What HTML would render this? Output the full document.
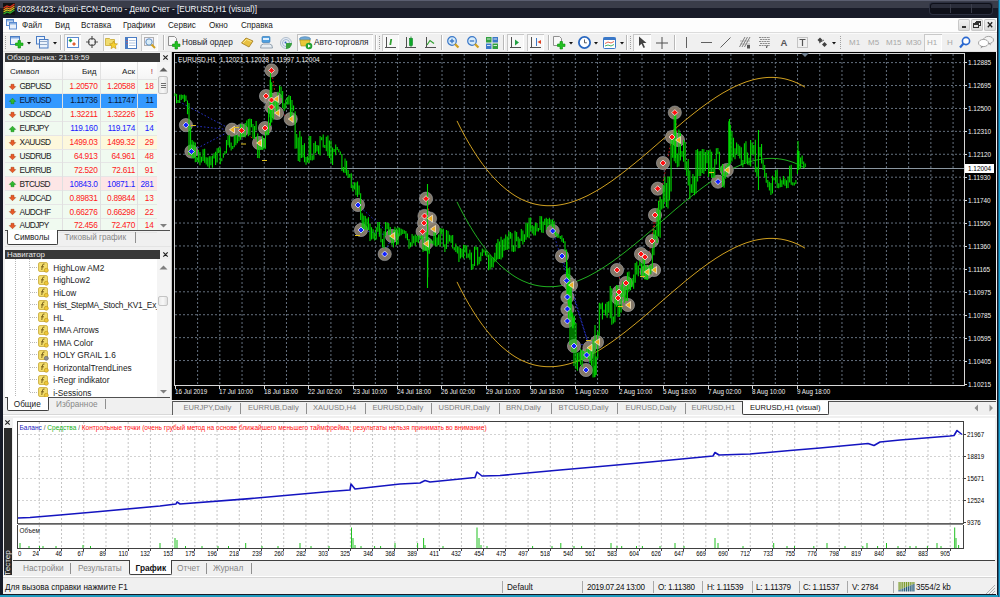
<!DOCTYPE html><html><head><meta charset="utf-8"><style>
html,body{margin:0;padding:0;width:1000px;height:597px;overflow:hidden;background:#f0f0f0;}
body{position:relative;font-family:"Liberation Sans", sans-serif;}
.t{position:absolute;white-space:nowrap;line-height:1;}
.r{text-align:right;}
svg{position:absolute;overflow:visible;}
</style></head><body>
<div style="position:absolute;left:0px;top:0px;width:1000px;height:597px;background:#161a27"></div>
<div style="position:absolute;left:0px;top:0px;width:1000px;height:1px;background:#5a5e70"></div>
<div style="position:absolute;left:0px;top:1px;width:1000px;height:7px;background:#3a3d4a"></div>
<div style="position:absolute;left:0px;top:8px;width:1000px;height:10px;background:#181b28"></div>
<div style="position:absolute;left:3px;top:18px;width:994px;height:577px;background:#f0f0f0"></div>
<div style="position:absolute;left:0px;top:595px;width:1000px;height:2px;background:#1f9cc0"></div>
<svg style="left:3px;top:3px" width="12" height="12" viewBox="0 0 12 12">
<rect x="0" y="0" width="12" height="12" fill="#111"/>
<path d="M0.5 5 L4 3 L7 4 L11.5 1" stroke="#e0301e" stroke-width="1.2" fill="none"/>
<path d="M0.5 7 L4 5 L7 6 L11.5 3" stroke="#f08a1e" stroke-width="1.2" fill="none"/>
<path d="M0.5 9 L4 7 L7 8 L11.5 5" stroke="#c8c820" stroke-width="1.2" fill="none"/>
<path d="M0.5 11 L4 9 L7 10 L11.5 7" stroke="#30b030" stroke-width="1.2" fill="none"/>
</svg>
<div class="t" style="left:17px;top:5.5px;font-size:8.15px;color:#f4f6fa;">60284423: Alpari-ECN-Demo - Демо Счет - [EURUSD,H1 (visual)]</div>
<div style="position:absolute;left:930px;top:3px;width:62px;height:11px;background:#0e1019;border-radius:3px;box-shadow:0 0 0 1px #2c3040;"></div>
<div style="position:absolute;left:931px;top:4px;width:60px;height:4px;background:#2a2d3a;border-radius:2px 2px 0 0"></div>
<div style="position:absolute;left:950px;top:4px;width:1px;height:9px;background:#3a3d4a"></div>
<div style="position:absolute;left:971px;top:4px;width:1px;height:9px;background:#3a3d4a"></div>
<div style="position:absolute;left:3px;top:18px;width:994px;height:14px;background:#fdfdfd"></div>
<div style="position:absolute;left:3px;top:32px;width:994px;height:1px;background:#dcdcdc"></div>
<svg style="left:6px;top:19px" width="11" height="11" viewBox="0 0 11 11">
<rect x="0.5" y="0.5" width="7" height="6" fill="#e8f0fa" stroke="#5a8ad0"/>
<rect x="3.5" y="3.5" width="7" height="6.5" fill="#e8f0fa" stroke="#5a8ad0"/>
<rect x="1" y="1" width="6" height="1.5" fill="#8ab0e0"/>
<rect x="4" y="4" width="6" height="1.5" fill="#8ab0e0"/>
</svg>
<div class="t" style="left:22px;top:21.8px;font-size:8.15px;color:#1a1a1a;">Файл</div>
<div class="t" style="left:55px;top:21.8px;font-size:8.15px;color:#1a1a1a;">Вид</div>
<div class="t" style="left:81px;top:21.8px;font-size:8.15px;color:#1a1a1a;">Вставка</div>
<div class="t" style="left:123px;top:21.8px;font-size:8.15px;color:#1a1a1a;">Графики</div>
<div class="t" style="left:168px;top:21.8px;font-size:8.15px;color:#1a1a1a;">Сервис</div>
<div class="t" style="left:209px;top:21.8px;font-size:8.15px;color:#1a1a1a;">Окно</div>
<div class="t" style="left:241px;top:21.8px;font-size:8.15px;color:#1a1a1a;">Справка</div>
<div style="position:absolute;left:958px;top:19px;width:12px;height:12px;background:linear-gradient(#f4f4f4,#d8d8d8);border-radius:2px;box-shadow:inset 0 0 0 1px #c8c8c8"></div>
<div style="position:absolute;left:971px;top:19px;width:12px;height:12px;background:linear-gradient(#f4f4f4,#d8d8d8);border-radius:2px;box-shadow:inset 0 0 0 1px #c8c8c8"></div>
<div style="position:absolute;left:984px;top:19px;width:12px;height:12px;background:linear-gradient(#f4f4f4,#d8d8d8);border-radius:2px;box-shadow:inset 0 0 0 1px #c8c8c8"></div>
<svg style="left:958px;top:19px" width="40" height="12" viewBox="0 0 40 12" shape-rendering="crispEdges">
<rect x="4" y="7" width="4" height="2" fill="#333"/>
<path d="M17.5 2.5 h5 v4 h-1.5 M17.5 2.5 v1.5" stroke="#333" stroke-width="1" fill="none"/>
<rect x="17.5" y="2.5" width="5" height="1.2" fill="#333"/>
<rect x="15.5" y="4.5" width="5" height="4" fill="none" stroke="#333" stroke-width="1"/>
<rect x="15.5" y="4.5" width="5" height="1.2" fill="#333"/>
</svg>
<svg style="left:958px;top:19px" width="40" height="12" viewBox="0 0 40 12">
<path d="M29.8 3.3 L34.2 8.2 M34.2 3.3 L29.8 8.2" stroke="#222" stroke-width="1.3"/>
</svg>
<div style="position:absolute;left:3px;top:33px;width:994px;height:19px;background:#f0f0f0"></div>
<div style="position:absolute;left:3px;top:33px;width:994px;height:1px;background:#fafafa"></div>
<div style="position:absolute;left:3px;top:51px;width:994px;height:1px;background:#e0e0e0"></div>
<div style="position:absolute;left:5px;top:36px;width:1px;height:1px;background:#a0a0a0"></div>
<div style="position:absolute;left:5px;top:38px;width:1px;height:1px;background:#a0a0a0"></div>
<div style="position:absolute;left:5px;top:40px;width:1px;height:1px;background:#a0a0a0"></div>
<div style="position:absolute;left:5px;top:42px;width:1px;height:1px;background:#a0a0a0"></div>
<div style="position:absolute;left:5px;top:44px;width:1px;height:1px;background:#a0a0a0"></div>
<div style="position:absolute;left:5px;top:46px;width:1px;height:1px;background:#a0a0a0"></div>
<div style="position:absolute;left:5px;top:48px;width:1px;height:1px;background:#a0a0a0"></div>
<svg style="left:10px;top:36px" width="14" height="13" viewBox="0 0 14 13">
<rect x="0.5" y="0.5" width="9" height="8" fill="#eaf2fc" stroke="#4a7cc4"/>
<rect x="1" y="1" width="8" height="1.5" fill="#80a8e0"/>
<path d="M8 4.5 h2.5 v2.5 h2.5 v2.5 h-2.5 v2.5 h-2.5 v-2.5 h-2.5 v-2.5 h2.5 z" fill="#22c022" stroke="#0a900a" stroke-width="0.6"/>
</svg>
<svg style="left:26.5px;top:41.5px" width="4" height="3"><path d="M0 0 H4 L2 2.5 Z" fill="#111"/></svg>
<svg style="left:36px;top:36px" width="13" height="13" viewBox="0 0 13 13">
<rect x="0.5" y="0.5" width="8" height="7.5" fill="#eaf2fc" stroke="#4a7cc4"/>
<rect x="3.5" y="3.5" width="8.5" height="8.5" fill="#eaf2fc" stroke="#4a7cc4"/>
<rect x="4" y="5" width="7" height="1" fill="#90a8c8"/><rect x="4" y="8" width="7" height="1" fill="#90a8c8"/>
</svg>
<svg style="left:52.5px;top:41.5px" width="4" height="3"><path d="M0 0 H4 L2 2.5 Z" fill="#111"/></svg>
<div style="position:absolute;left:60px;top:35px;width:1px;height:15px;background:#b8b8b8"></div>
<div style="position:absolute;left:61px;top:35px;width:1px;height:15px;background:#fff"></div>
<div style="position:absolute;left:64px;top:34px;width:17px;height:17px;background:#f8f8f8;box-shadow:inset 1px 1px 0 #c8c8c8, inset -1px -1px 0 #fff"></div>
<svg style="left:67px;top:37px" width="12" height="11" viewBox="0 0 12 11">
<rect x="0.5" y="0.5" width="11" height="10" fill="#fff" stroke="#5a8ad0"/>
<path d="M3.5 1.5 l2 2 -2 2 -2 -2z" fill="#20a040"/><path d="M7 5 l2 2 -2 2 -2 -2z" fill="#e06030"/>
</svg>
<svg style="left:86px;top:36px" width="12" height="12" viewBox="0 0 12 12">
<circle cx="6" cy="6" r="3.5" fill="none" stroke="#555" stroke-width="1.2"/>
<path d="M6 0 V4 M6 8 V12 M0 6 H4 M8 6 H12" stroke="#555" stroke-width="1.2"/>
</svg>
<div style="position:absolute;left:103px;top:34px;width:17px;height:17px;background:#f8f8f8;box-shadow:inset 1px 1px 0 #c8c8c8, inset -1px -1px 0 #fff"></div>
<svg style="left:105px;top:36px" width="13" height="13" viewBox="0 0 13 13">
<path d="M0.5 2.5 h4 l1 1 h4 v6 h-9z" fill="#f0dc70" stroke="#c8a830" stroke-width="0.8"/>
<path d="M8.5 5 l1.2 2.6 2.8 0.3 -2.1 1.9 0.6 2.8 -2.5 -1.4 -2.5 1.4 0.6 -2.8 -2.1 -1.9 2.8 -0.3z" fill="#f5d030" stroke="#c09010" stroke-width="0.6"/>
</svg>
<svg style="left:125px;top:37px" width="12" height="12" viewBox="0 0 12 12">
<rect x="0.5" y="0.5" width="11" height="11" fill="#fff" stroke="#4a7cc4"/>
<rect x="1" y="1" width="2" height="10" fill="#4a7cc4"/>
<path d="M4 3.5 H10.5 M4 6 H10.5 M4 8.5 H10.5" stroke="#a0b8d8" stroke-width="0.8"/>
<rect x="1.5" y="3" width="1" height="1" fill="#e04040"/><rect x="1.5" y="6" width="1" height="1" fill="#e04040"/>
</svg>
<div style="position:absolute;left:141px;top:34px;width:17px;height:17px;background:#f8f8f8;box-shadow:inset 1px 1px 0 #c8c8c8, inset -1px -1px 0 #fff"></div>
<svg style="left:144px;top:37px" width="12" height="12" viewBox="0 0 12 12">
<rect x="0.5" y="0.5" width="9" height="8" fill="#eef" stroke="#b0b0b0"/>
<circle cx="5" cy="5" r="3.2" fill="#d8ecf8" stroke="#6090c0" stroke-width="1"/>
<path d="M7.5 7.5 L11 11" stroke="#d0a020" stroke-width="2"/>
</svg>
<div style="position:absolute;left:163px;top:35px;width:1px;height:15px;background:#b8b8b8"></div>
<div style="position:absolute;left:164px;top:35px;width:1px;height:15px;background:#fff"></div>
<svg style="left:168px;top:36px" width="14" height="14" viewBox="0 0 14 14">
<path d="M0.5 0.5 h6 l2 2 v7 h-8z" fill="#f8f8f8" stroke="#909090"/>
<path d="M7 5.5 h2.5 v2.5 h2.5 v2.5 h-2.5 v2.5 h-2.5 v-2.5 h-2.5 v-2.5 h2.5 z" fill="#22c022" stroke="#0a900a" stroke-width="0.6"/>
</svg>
<div class="t" style="left:182px;top:38.8px;font-size:8.25px;color:#1a1a2a;">Новый ордер</div>
<svg style="left:241px;top:37px" width="13" height="11" viewBox="0 0 13 11">
<path d="M0.5 6 L5 1 L12 4 L8 10 Z" fill="#e8c040" stroke="#a07818" stroke-width="0.8"/>
<path d="M2 6 L5.5 2.5 L10.5 4.5" stroke="#fff0a0" stroke-width="0.8" fill="none"/>
</svg>
<svg style="left:260px;top:36px" width="13" height="13" viewBox="0 0 13 13">
<rect x="2" y="0.5" width="8" height="6" rx="1" fill="#50a0e0" stroke="#2a70b0" stroke-width="0.6"/>
<rect x="3" y="2" width="6" height="2" fill="#e0f0ff"/>
<path d="M0.5 12 q0 -4 3 -4 h6 q3 0 3 4 z" fill="#e8eef4" stroke="#8090a0" stroke-width="0.8"/>
</svg>
<svg style="left:280px;top:37px" width="13" height="12" viewBox="0 0 13 12">
<circle cx="6" cy="6" r="5.5" fill="#e8eef6" stroke="#a0b0c0" stroke-width="0.8"/>
<circle cx="6" cy="6" r="3.5" fill="none" stroke="#90a8c8" stroke-width="0.8"/>
<path d="M6 6 L12 6 A6 6 0 0 1 6 12 Z" fill="#3aa040"/>
<circle cx="5.5" cy="5.5" r="1" fill="#3060c0"/>
</svg>
<div style="position:absolute;left:297px;top:34px;width:76px;height:17px;background:#f8f8f8;box-shadow:inset 1px 1px 0 #c0c0c0, inset -1px -1px 0 #fff"></div>
<svg style="left:299px;top:36px" width="14" height="14" viewBox="0 0 14 14">
<ellipse cx="6" cy="3" rx="5.5" ry="2.3" fill="#70a8d8" stroke="#4078a8" stroke-width="0.6"/>
<path d="M0.8 4 L2 10 h8 l1.2 -6z" fill="#e8c838" stroke="#a08818" stroke-width="0.6"/>
<circle cx="10" cy="10" r="3.3" fill="#20a030"/><path d="M9 8.2 L11.8 10 L9 11.8z" fill="#fff"/>
</svg>
<div class="t" style="left:314px;top:38.8px;font-size:8.25px;color:#1a1a2a;">Авто-торговля</div>
<div style="position:absolute;left:375px;top:35px;width:1px;height:15px;background:#b8b8b8"></div>
<div style="position:absolute;left:376px;top:35px;width:1px;height:15px;background:#fff"></div>
<div style="position:absolute;left:379px;top:36px;width:1px;height:1px;background:#a0a0a0"></div>
<div style="position:absolute;left:379px;top:38px;width:1px;height:1px;background:#a0a0a0"></div>
<div style="position:absolute;left:379px;top:40px;width:1px;height:1px;background:#a0a0a0"></div>
<div style="position:absolute;left:379px;top:42px;width:1px;height:1px;background:#a0a0a0"></div>
<div style="position:absolute;left:379px;top:44px;width:1px;height:1px;background:#a0a0a0"></div>
<div style="position:absolute;left:379px;top:46px;width:1px;height:1px;background:#a0a0a0"></div>
<div style="position:absolute;left:379px;top:48px;width:1px;height:1px;background:#a0a0a0"></div>
<div style="position:absolute;left:382px;top:34px;width:17px;height:17px;background:#f8f8f8;box-shadow:inset 1px 1px 0 #c8c8c8, inset -1px -1px 0 #fff"></div>
<svg style="left:385px;top:37px" width="12" height="12" viewBox="0 0 12 12">
<path d="M1.5 0 V11 M0 10.5 H11" stroke="#505050" stroke-width="1"/>
<path d="M6 2 L5 8 M6.5 2 L5.5 8" stroke="#30a030" stroke-width="1.3"/>
</svg>
<svg style="left:405px;top:36px" width="12" height="13" viewBox="0 0 12 13">
<path d="M1.5 1 V12 M0 11.5 H11" stroke="#505050" stroke-width="1"/>
<rect x="4.5" y="2.5" width="3" height="7" fill="#10c030" stroke="#088020" stroke-width="0.6"/>
<path d="M6 0.5 V11" stroke="#088020" stroke-width="0.8"/>
</svg>
<svg style="left:425px;top:37px" width="12" height="12" viewBox="0 0 12 12">
<path d="M1.5 0 V11 M0 10.5 H11" stroke="#505050" stroke-width="1"/>
<path d="M2 8 L5 3.5 L9 6.5" stroke="#30a030" stroke-width="1.2" fill="none"/>
</svg>
<div style="position:absolute;left:441px;top:35px;width:1px;height:15px;background:#b8b8b8"></div>
<div style="position:absolute;left:442px;top:35px;width:1px;height:15px;background:#fff"></div>
<svg style="left:447px;top:36px" width="13" height="13" viewBox="0 0 13 13">
<circle cx="5" cy="5" r="4.3" fill="#d8ecfa" stroke="#3a78c8" stroke-width="1.2"/>
<path d="M2.8 5 H7.2 M5 2.8 V7.2" stroke="#3a78c8" stroke-width="1.3"/>
<path d="M8 8 L11.5 11.5" stroke="#d0a020" stroke-width="2.2"/>
</svg>
<svg style="left:467px;top:36px" width="13" height="13" viewBox="0 0 13 13">
<circle cx="5" cy="5" r="4.3" fill="#d8ecfa" stroke="#3a78c8" stroke-width="1.2"/>
<path d="M2.8 5 H7.2" stroke="#3a78c8" stroke-width="1.3"/>
<path d="M8 8 L11.5 11.5" stroke="#d0a020" stroke-width="2.2"/>
</svg>
<svg style="left:486px;top:37px" width="12" height="12" viewBox="0 0 12 12">
<rect x="0" y="0" width="5.5" height="5.5" fill="#30a040"/><rect x="6.5" y="0" width="5.5" height="5.5" fill="#3a78c8"/>
<rect x="0" y="6.5" width="5.5" height="5.5" fill="#3a78c8"/><rect x="6.5" y="6.5" width="5.5" height="5.5" fill="#30a040"/>
<path d="M1 2 H4.5 M7.5 2 H11 M1 8.5 H4.5 M7.5 8.5 H11" stroke="#fff" stroke-width="0.8"/>
</svg>
<div style="position:absolute;left:503px;top:35px;width:1px;height:15px;background:#b8b8b8"></div>
<div style="position:absolute;left:504px;top:35px;width:1px;height:15px;background:#fff"></div>
<div style="position:absolute;left:507px;top:34px;width:17px;height:17px;background:#f8f8f8;box-shadow:inset 1px 1px 0 #c8c8c8, inset -1px -1px 0 #fff"></div>
<div style="position:absolute;left:527px;top:34px;width:17px;height:17px;background:#f8f8f8;box-shadow:inset 1px 1px 0 #c8c8c8, inset -1px -1px 0 #fff"></div>
<svg style="left:510px;top:37px" width="12" height="12" viewBox="0 0 12 12">
<path d="M1.5 0 V11 M0 10.5 H11" stroke="#505050" stroke-width="1"/>
<path d="M5 2.5 L9 5.5 L5 8.5z" fill="#20a040"/>
</svg>
<svg style="left:530px;top:37px" width="12" height="12" viewBox="0 0 12 12">
<path d="M1.5 0 V11 M0 10.5 H11" stroke="#505050" stroke-width="1"/>
<path d="M6.5 1 V9" stroke="#3a78c8" stroke-width="1"/>
<path d="M11 3 L7.5 5 L11 7z" fill="#e04020"/>
</svg>
<div style="position:absolute;left:548px;top:35px;width:1px;height:15px;background:#b8b8b8"></div>
<div style="position:absolute;left:549px;top:35px;width:1px;height:15px;background:#fff"></div>
<svg style="left:553px;top:36px" width="14" height="14" viewBox="0 0 14 14">
<path d="M0.5 0.5 h6 l2 2 v7 h-8z" fill="#f8f8f8" stroke="#909090"/>
<path d="M7 5.5 h2.5 v2.5 h2.5 v2.5 h-2.5 v2.5 h-2.5 v-2.5 h-2.5 v-2.5 h2.5 z" fill="#22c022" stroke="#0a900a" stroke-width="0.6"/>
</svg>
<svg style="left:568.5px;top:41.5px" width="4" height="3"><path d="M0 0 H4 L2 2.5 Z" fill="#111"/></svg>
<svg style="left:578px;top:36px" width="13" height="13" viewBox="0 0 13 13">
<circle cx="6.5" cy="6.5" r="5.6" fill="#fff" stroke="#2a68c0" stroke-width="1.8"/>
<path d="M6.5 3.5 V6.8 H8.8" stroke="#333" stroke-width="0.8" fill="none"/>
</svg>
<svg style="left:593.5px;top:41.5px" width="4" height="3"><path d="M0 0 H4 L2 2.5 Z" fill="#111"/></svg>
<svg style="left:603px;top:37px" width="13" height="12" viewBox="0 0 13 12">
<rect x="0.5" y="0.5" width="12" height="11" rx="1" fill="#fff" stroke="#3a78c8" stroke-width="1"/>
<rect x="0.5" y="0.5" width="12" height="2.5" fill="#3a78c8"/>
<path d="M2 6.5 L5 5 L8 6 L11 4.5" stroke="#e04020" stroke-width="0.8" fill="none"/>
<path d="M2 9 L5 8 L8 9 L11 7.5" stroke="#20a040" stroke-width="0.8" fill="none"/>
</svg>
<svg style="left:619.5px;top:41.5px" width="4" height="3"><path d="M0 0 H4 L2 2.5 Z" fill="#111"/></svg>
<div style="position:absolute;left:626px;top:35px;width:1px;height:15px;background:#b8b8b8"></div>
<div style="position:absolute;left:627px;top:35px;width:1px;height:15px;background:#fff"></div>
<div style="position:absolute;left:630px;top:36px;width:1px;height:1px;background:#a0a0a0"></div>
<div style="position:absolute;left:630px;top:38px;width:1px;height:1px;background:#a0a0a0"></div>
<div style="position:absolute;left:630px;top:40px;width:1px;height:1px;background:#a0a0a0"></div>
<div style="position:absolute;left:630px;top:42px;width:1px;height:1px;background:#a0a0a0"></div>
<div style="position:absolute;left:630px;top:44px;width:1px;height:1px;background:#a0a0a0"></div>
<div style="position:absolute;left:630px;top:46px;width:1px;height:1px;background:#a0a0a0"></div>
<div style="position:absolute;left:630px;top:48px;width:1px;height:1px;background:#a0a0a0"></div>
<div style="position:absolute;left:633px;top:34px;width:18px;height:17px;background:#f8f8f8;box-shadow:inset 1px 1px 0 #c8c8c8, inset -1px -1px 0 #fff"></div>
<svg style="left:638px;top:36px" width="10" height="13" viewBox="0 0 10 13">
<path d="M1 0.5 L1 10 L3.5 7.8 L5.5 12 L7 11.3 L5 7 L8.5 7 Z" fill="#404040"/>
</svg>
<svg style="left:656px;top:37px" width="12" height="12" viewBox="0 0 12 12">
<path d="M6 0 V12 M0 6 H12" stroke="#505050" stroke-width="1"/>
</svg>
<div style="position:absolute;left:674px;top:35px;width:1px;height:15px;background:#b8b8b8"></div>
<div style="position:absolute;left:675px;top:35px;width:1px;height:15px;background:#fff"></div>
<div style="position:absolute;left:686px;top:37px;width:1px;height:11px;background:#606060"></div>
<div style="position:absolute;left:701px;top:42px;width:11px;height:1px;background:#606060"></div>
<svg style="left:720px;top:37px" width="11" height="11"><path d="M0.5 10.5 L10.5 0.5" stroke="#606060" stroke-width="1"/></svg>
<svg style="left:739px;top:36px" width="13" height="13" viewBox="0 0 13 13">
<path d="M0.5 11 L6 1 M3 11 L8.5 1 M5.5 11 L11 1" stroke="#707070" stroke-width="0.9"/>
<path d="M1 5 H11 M1 8 H11" stroke="#909090" stroke-width="0.7"/>
<rect x="8" y="9" width="3" height="3.5" fill="#555"/>
</svg>
<svg style="left:759px;top:36px" width="13" height="13" viewBox="0 0 13 13">
<path d="M0 1.5 H11 M1 3.5 H11 M0 5.5 H11 M1 7.5 H11 M0 9.5 H11" stroke="#707070" stroke-width="0.8" stroke-dasharray="2 0.6"/>
<path d="M8 9.5 L7.5 12" stroke="#555" stroke-width="1.2"/>
</svg>
<div class="t" style="left:780.5px;top:38px;font-size:9.5px;color:#555;font-weight:bold">A</div>
<svg style="left:797px;top:36px" width="12" height="13" viewBox="0 0 12 13">
<rect x="0.5" y="1.5" width="10" height="10" fill="none" stroke="#808080" stroke-width="0.8" stroke-dasharray="1 1"/>
<path d="M2.5 3.5 H8.5 M5.5 3.5 V10" stroke="#555" stroke-width="1.2"/>
</svg>
<svg style="left:817px;top:37px" width="11" height="11" viewBox="0 0 11 11">
<path d="M0.5 3 L3 0.5 L5.5 3 L3 5.5z" fill="#404040"/><path d="M5 7.5 L7.5 5 L10 7.5 L7.5 10z" fill="#404040"/>
<path d="M2 6 L7 3" stroke="#404040" stroke-width="0.8"/>
</svg>
<svg style="left:831.5px;top:41.5px" width="4" height="3"><path d="M0 0 H4 L2 2.5 Z" fill="#111"/></svg>
<div style="position:absolute;left:840px;top:36px;width:1px;height:1px;background:#a0a0a0"></div>
<div style="position:absolute;left:840px;top:38px;width:1px;height:1px;background:#a0a0a0"></div>
<div style="position:absolute;left:840px;top:40px;width:1px;height:1px;background:#a0a0a0"></div>
<div style="position:absolute;left:840px;top:42px;width:1px;height:1px;background:#a0a0a0"></div>
<div style="position:absolute;left:840px;top:44px;width:1px;height:1px;background:#a0a0a0"></div>
<div style="position:absolute;left:840px;top:46px;width:1px;height:1px;background:#a0a0a0"></div>
<div style="position:absolute;left:840px;top:48px;width:1px;height:1px;background:#a0a0a0"></div>
<div class="t" style="left:849px;top:38.8px;font-size:8px;color:#a8a8a8;">M1</div>
<div class="t" style="left:868px;top:38.8px;font-size:8px;color:#a8a8a8;">M5</div>
<div class="t" style="left:886px;top:38.8px;font-size:8px;color:#a8a8a8;">M15</div>
<div class="t" style="left:906px;top:38.8px;font-size:8px;color:#a8a8a8;">M30</div>
<div class="t" style="left:947px;top:38.8px;font-size:8px;color:#a8a8a8;">H</div>
<div style="position:absolute;left:924px;top:34px;width:18px;height:17px;background:#f8f8f8;box-shadow:inset 1px 1px 0 #c8c8c8, inset -1px -1px 0 #fff"></div>
<div class="t" style="left:927px;top:38.8px;font-size:8px;color:#a8a8a8;">H1</div>
<svg style="left:959px;top:36px" width="12" height="13" viewBox="0 0 12 13">
<circle cx="7" cy="5" r="3.6" fill="#fff" stroke="#2a68d0" stroke-width="1.6"/>
<path d="M4.5 7.5 L1 11.5" stroke="#2a68d0" stroke-width="2.2"/>
</svg>
<svg style="left:978px;top:35px" width="16" height="14" viewBox="0 0 16 14">
<ellipse cx="10.5" cy="5" rx="5" ry="3.6" fill="#f4f4f4" stroke="#909090" stroke-width="0.8"/>
<path d="M12 8 L13 10.5 L10 8.3" fill="#909090"/>
<ellipse cx="5.5" cy="8" rx="5" ry="3.6" fill="#fff" stroke="#909090" stroke-width="0.8"/>
<path d="M3.5 11 L2.5 13.5 L6 11.3" fill="#909090"/>
</svg>
<div style="position:absolute;left:5px;top:53px;width:155px;height:9px;background:#383838"></div>
<div class="t" style="left:7px;top:54px;font-size:7.9px;color:#e8e8e8;">Обзор рынка: 21:19:59</div>
<svg style="left:162px;top:54px" width="7" height="7" viewBox="0 0 7 7"><path d="M1.3 1.3 L5.7 5.7 M5.7 1.3 L1.3 5.7" stroke="#222" stroke-width="1.15"/></svg>
<div style="position:absolute;left:5px;top:62px;width:152px;height:168px;background:#fff"></div>
<div style="position:absolute;left:5px;top:62px;width:152px;height:18px;background:linear-gradient(#ffffff,#f4f4f4)"></div>
<div style="position:absolute;left:5px;top:79px;width:152px;height:1px;background:#e4e4e4"></div>
<div style="position:absolute;left:62px;top:62px;width:1px;height:168px;background:#e2e2e2"></div>
<div style="position:absolute;left:100px;top:62px;width:1px;height:168px;background:#e2e2e2"></div>
<div style="position:absolute;left:137px;top:62px;width:1px;height:168px;background:#e2e2e2"></div>
<div class="t" style="left:10px;top:68px;font-size:8.1px;color:#222;">Символ</div>
<div class="t" style="left:62px;top:68px;font-size:8.1px;color:#222;width:34.5px;text-align:right">Бид</div>
<div class="t" style="left:100px;top:68px;font-size:8.1px;color:#222;width:35px;text-align:right">Аск</div>
<div class="t" style="left:137px;top:68px;font-size:8.1px;color:#a02040;width:16px;text-align:right">!</div>
<div style="position:absolute;left:5px;top:80.00px;width:152px;height:13.90px;background:#f0faf0"></div>
<div style="position:absolute;left:5px;top:92.90px;width:152px;height:1px;background:#e6e6e6"></div>
<div style="position:absolute;left:62px;top:80.00px;width:1px;height:13.90px;background:#e0e0e0"></div>
<div style="position:absolute;left:100px;top:80.00px;width:1px;height:13.90px;background:#e0e0e0"></div>
<div style="position:absolute;left:137px;top:80.00px;width:1px;height:13.90px;background:#e0e0e0"></div>
<svg style="left:9px;top:84.00px" width="7" height="6" viewBox="0 0 7 6"><path d="M2 0.3 H5 V2.6 H6.7 L3.5 5.8 L0.3 2.6 H2 Z" fill="#e85a28" stroke="#a83a10" stroke-width="0.5"/></svg>
<div class="t" style="left:19.5px;top:82.4px;font-size:8.3px;color:#222;letter-spacing:-0.6px">GBPUSD</div>
<div class="t" style="left:62px;top:82.4px;font-size:8.3px;color:#ff2020;width:35.5px;text-align:right;letter-spacing:-0.3px">1.20570</div>
<div class="t" style="left:100px;top:82.4px;font-size:8.3px;color:#ff2020;width:35px;text-align:right;letter-spacing:-0.3px">1.20588</div>
<div class="t" style="left:137px;top:82.4px;font-size:8.3px;color:#ff2020;width:16.5px;text-align:right;letter-spacing:-0.3px">18</div>
<div style="position:absolute;left:5px;top:93.90px;width:152px;height:13.90px;background:#3399ff"></div>
<div style="position:absolute;left:62px;top:93.90px;width:1px;height:13.90px;background:#e0e0e0"></div>
<div style="position:absolute;left:100px;top:93.90px;width:1px;height:13.90px;background:#e0e0e0"></div>
<div style="position:absolute;left:137px;top:93.90px;width:1px;height:13.90px;background:#e0e0e0"></div>
<svg style="left:9px;top:97.90px" width="7" height="6" viewBox="0 0 7 6"><path d="M2 5.7 H5 V3.4 H6.7 L3.5 0.2 L0.3 3.4 H2 Z" fill="#30b830" stroke="#108010" stroke-width="0.5"/></svg>
<div class="t" style="left:19.5px;top:96.30000000000001px;font-size:8.3px;color:#0a1a3a;letter-spacing:-0.6px">EURUSD</div>
<div class="t" style="left:62px;top:96.30000000000001px;font-size:8.3px;color:#0a1a3a;width:35.5px;text-align:right;letter-spacing:-0.3px">1.11736</div>
<div class="t" style="left:100px;top:96.30000000000001px;font-size:8.3px;color:#0a1a3a;width:35px;text-align:right;letter-spacing:-0.3px">1.11747</div>
<div class="t" style="left:137px;top:96.30000000000001px;font-size:8.3px;color:#0a1a3a;width:16.5px;text-align:right;letter-spacing:-0.3px">11</div>
<div style="position:absolute;left:5px;top:107.80px;width:152px;height:13.90px;background:#f0faf0"></div>
<div style="position:absolute;left:5px;top:120.70px;width:152px;height:1px;background:#e6e6e6"></div>
<div style="position:absolute;left:62px;top:107.80px;width:1px;height:13.90px;background:#e0e0e0"></div>
<div style="position:absolute;left:100px;top:107.80px;width:1px;height:13.90px;background:#e0e0e0"></div>
<div style="position:absolute;left:137px;top:107.80px;width:1px;height:13.90px;background:#e0e0e0"></div>
<svg style="left:9px;top:111.80px" width="7" height="6" viewBox="0 0 7 6"><path d="M2 0.3 H5 V2.6 H6.7 L3.5 5.8 L0.3 2.6 H2 Z" fill="#e85a28" stroke="#a83a10" stroke-width="0.5"/></svg>
<div class="t" style="left:19.5px;top:110.2px;font-size:8.3px;color:#222;letter-spacing:-0.6px">USDCAD</div>
<div class="t" style="left:62px;top:110.2px;font-size:8.3px;color:#ff2020;width:35.5px;text-align:right;letter-spacing:-0.3px">1.32211</div>
<div class="t" style="left:100px;top:110.2px;font-size:8.3px;color:#ff2020;width:35px;text-align:right;letter-spacing:-0.3px">1.32226</div>
<div class="t" style="left:137px;top:110.2px;font-size:8.3px;color:#ff2020;width:16.5px;text-align:right;letter-spacing:-0.3px">15</div>
<div style="position:absolute;left:5px;top:121.70px;width:152px;height:13.90px;background:#f0faf0"></div>
<div style="position:absolute;left:5px;top:134.60px;width:152px;height:1px;background:#e6e6e6"></div>
<div style="position:absolute;left:62px;top:121.70px;width:1px;height:13.90px;background:#e0e0e0"></div>
<div style="position:absolute;left:100px;top:121.70px;width:1px;height:13.90px;background:#e0e0e0"></div>
<div style="position:absolute;left:137px;top:121.70px;width:1px;height:13.90px;background:#e0e0e0"></div>
<svg style="left:9px;top:125.70px" width="7" height="6" viewBox="0 0 7 6"><path d="M2 5.7 H5 V3.4 H6.7 L3.5 0.2 L0.3 3.4 H2 Z" fill="#30b830" stroke="#108010" stroke-width="0.5"/></svg>
<div class="t" style="left:19.5px;top:124.10000000000001px;font-size:8.3px;color:#222;letter-spacing:-0.6px">EURJPY</div>
<div class="t" style="left:62px;top:124.10000000000001px;font-size:8.3px;color:#2020ff;width:35.5px;text-align:right;letter-spacing:-0.3px">119.160</div>
<div class="t" style="left:100px;top:124.10000000000001px;font-size:8.3px;color:#2020ff;width:35px;text-align:right;letter-spacing:-0.3px">119.174</div>
<div class="t" style="left:137px;top:124.10000000000001px;font-size:8.3px;color:#2020ff;width:16.5px;text-align:right;letter-spacing:-0.3px">14</div>
<div style="position:absolute;left:5px;top:135.60px;width:152px;height:13.90px;background:#fdf8dc"></div>
<div style="position:absolute;left:5px;top:148.50px;width:152px;height:1px;background:#e6e6e6"></div>
<div style="position:absolute;left:62px;top:135.60px;width:1px;height:13.90px;background:#e0e0e0"></div>
<div style="position:absolute;left:100px;top:135.60px;width:1px;height:13.90px;background:#e0e0e0"></div>
<div style="position:absolute;left:137px;top:135.60px;width:1px;height:13.90px;background:#e0e0e0"></div>
<svg style="left:9px;top:139.60px" width="7" height="6" viewBox="0 0 7 6"><path d="M2 0.3 H5 V2.6 H6.7 L3.5 5.8 L0.3 2.6 H2 Z" fill="#e85a28" stroke="#a83a10" stroke-width="0.5"/></svg>
<div class="t" style="left:19.5px;top:138.0px;font-size:8.3px;color:#222;letter-spacing:-0.6px">XAUUSD</div>
<div class="t" style="left:62px;top:138.0px;font-size:8.3px;color:#ff2020;width:35.5px;text-align:right;letter-spacing:-0.3px">1499.03</div>
<div class="t" style="left:100px;top:138.0px;font-size:8.3px;color:#ff2020;width:35px;text-align:right;letter-spacing:-0.3px">1499.32</div>
<div class="t" style="left:137px;top:138.0px;font-size:8.3px;color:#ff2020;width:16.5px;text-align:right;letter-spacing:-0.3px">29</div>
<div style="position:absolute;left:5px;top:149.50px;width:152px;height:13.90px;background:#f0faf0"></div>
<div style="position:absolute;left:5px;top:162.40px;width:152px;height:1px;background:#e6e6e6"></div>
<div style="position:absolute;left:62px;top:149.50px;width:1px;height:13.90px;background:#e0e0e0"></div>
<div style="position:absolute;left:100px;top:149.50px;width:1px;height:13.90px;background:#e0e0e0"></div>
<div style="position:absolute;left:137px;top:149.50px;width:1px;height:13.90px;background:#e0e0e0"></div>
<svg style="left:9px;top:153.50px" width="7" height="6" viewBox="0 0 7 6"><path d="M2 0.3 H5 V2.6 H6.7 L3.5 5.8 L0.3 2.6 H2 Z" fill="#e85a28" stroke="#a83a10" stroke-width="0.5"/></svg>
<div class="t" style="left:19.5px;top:151.9px;font-size:8.3px;color:#222;letter-spacing:-0.6px">USDRUB</div>
<div class="t" style="left:62px;top:151.9px;font-size:8.3px;color:#ff2020;width:35.5px;text-align:right;letter-spacing:-0.3px">64.913</div>
<div class="t" style="left:100px;top:151.9px;font-size:8.3px;color:#ff2020;width:35px;text-align:right;letter-spacing:-0.3px">64.961</div>
<div class="t" style="left:137px;top:151.9px;font-size:8.3px;color:#ff2020;width:16.5px;text-align:right;letter-spacing:-0.3px">48</div>
<div style="position:absolute;left:5px;top:163.40px;width:152px;height:13.90px;background:#f0faf0"></div>
<div style="position:absolute;left:5px;top:176.30px;width:152px;height:1px;background:#e6e6e6"></div>
<div style="position:absolute;left:62px;top:163.40px;width:1px;height:13.90px;background:#e0e0e0"></div>
<div style="position:absolute;left:100px;top:163.40px;width:1px;height:13.90px;background:#e0e0e0"></div>
<div style="position:absolute;left:137px;top:163.40px;width:1px;height:13.90px;background:#e0e0e0"></div>
<svg style="left:9px;top:167.40px" width="7" height="6" viewBox="0 0 7 6"><path d="M2 0.3 H5 V2.6 H6.7 L3.5 5.8 L0.3 2.6 H2 Z" fill="#e85a28" stroke="#a83a10" stroke-width="0.5"/></svg>
<div class="t" style="left:19.5px;top:165.8px;font-size:8.3px;color:#222;letter-spacing:-0.6px">EURRUB</div>
<div class="t" style="left:62px;top:165.8px;font-size:8.3px;color:#ff2020;width:35.5px;text-align:right;letter-spacing:-0.3px">72.520</div>
<div class="t" style="left:100px;top:165.8px;font-size:8.3px;color:#ff2020;width:35px;text-align:right;letter-spacing:-0.3px">72.611</div>
<div class="t" style="left:137px;top:165.8px;font-size:8.3px;color:#ff2020;width:16.5px;text-align:right;letter-spacing:-0.3px">91</div>
<div style="position:absolute;left:5px;top:177.30px;width:152px;height:13.90px;background:#fde6e6"></div>
<div style="position:absolute;left:5px;top:190.20px;width:152px;height:1px;background:#e6e6e6"></div>
<div style="position:absolute;left:62px;top:177.30px;width:1px;height:13.90px;background:#e0e0e0"></div>
<div style="position:absolute;left:100px;top:177.30px;width:1px;height:13.90px;background:#e0e0e0"></div>
<div style="position:absolute;left:137px;top:177.30px;width:1px;height:13.90px;background:#e0e0e0"></div>
<svg style="left:9px;top:181.30px" width="7" height="6" viewBox="0 0 7 6"><path d="M2 5.7 H5 V3.4 H6.7 L3.5 0.2 L0.3 3.4 H2 Z" fill="#30b830" stroke="#108010" stroke-width="0.5"/></svg>
<div class="t" style="left:19.5px;top:179.70000000000002px;font-size:8.3px;color:#222;letter-spacing:-0.6px">BTCUSD</div>
<div class="t" style="left:62px;top:179.70000000000002px;font-size:8.3px;color:#2020ff;width:35.5px;text-align:right;letter-spacing:-0.3px">10843.0</div>
<div class="t" style="left:100px;top:179.70000000000002px;font-size:8.3px;color:#2020ff;width:35px;text-align:right;letter-spacing:-0.3px">10871.1</div>
<div class="t" style="left:137px;top:179.70000000000002px;font-size:8.3px;color:#2020ff;width:16.5px;text-align:right;letter-spacing:-0.3px">281</div>
<div style="position:absolute;left:5px;top:191.20px;width:152px;height:13.90px;background:#f0faf0"></div>
<div style="position:absolute;left:5px;top:204.10px;width:152px;height:1px;background:#e6e6e6"></div>
<div style="position:absolute;left:62px;top:191.20px;width:1px;height:13.90px;background:#e0e0e0"></div>
<div style="position:absolute;left:100px;top:191.20px;width:1px;height:13.90px;background:#e0e0e0"></div>
<div style="position:absolute;left:137px;top:191.20px;width:1px;height:13.90px;background:#e0e0e0"></div>
<svg style="left:9px;top:195.20px" width="7" height="6" viewBox="0 0 7 6"><path d="M2 0.3 H5 V2.6 H6.7 L3.5 5.8 L0.3 2.6 H2 Z" fill="#e85a28" stroke="#a83a10" stroke-width="0.5"/></svg>
<div class="t" style="left:19.5px;top:193.6px;font-size:8.3px;color:#222;letter-spacing:-0.6px">AUDCAD</div>
<div class="t" style="left:62px;top:193.6px;font-size:8.3px;color:#ff2020;width:35.5px;text-align:right;letter-spacing:-0.3px">0.89831</div>
<div class="t" style="left:100px;top:193.6px;font-size:8.3px;color:#ff2020;width:35px;text-align:right;letter-spacing:-0.3px">0.89844</div>
<div class="t" style="left:137px;top:193.6px;font-size:8.3px;color:#ff2020;width:16.5px;text-align:right;letter-spacing:-0.3px">13</div>
<div style="position:absolute;left:5px;top:205.10px;width:152px;height:13.90px;background:#f0faf0"></div>
<div style="position:absolute;left:5px;top:218.00px;width:152px;height:1px;background:#e6e6e6"></div>
<div style="position:absolute;left:62px;top:205.10px;width:1px;height:13.90px;background:#e0e0e0"></div>
<div style="position:absolute;left:100px;top:205.10px;width:1px;height:13.90px;background:#e0e0e0"></div>
<div style="position:absolute;left:137px;top:205.10px;width:1px;height:13.90px;background:#e0e0e0"></div>
<svg style="left:9px;top:209.10px" width="7" height="6" viewBox="0 0 7 6"><path d="M2 0.3 H5 V2.6 H6.7 L3.5 5.8 L0.3 2.6 H2 Z" fill="#e85a28" stroke="#a83a10" stroke-width="0.5"/></svg>
<div class="t" style="left:19.5px;top:207.50000000000003px;font-size:8.3px;color:#222;letter-spacing:-0.6px">AUDCHF</div>
<div class="t" style="left:62px;top:207.50000000000003px;font-size:8.3px;color:#ff2020;width:35.5px;text-align:right;letter-spacing:-0.3px">0.66276</div>
<div class="t" style="left:100px;top:207.50000000000003px;font-size:8.3px;color:#ff2020;width:35px;text-align:right;letter-spacing:-0.3px">0.66298</div>
<div class="t" style="left:137px;top:207.50000000000003px;font-size:8.3px;color:#ff2020;width:16.5px;text-align:right;letter-spacing:-0.3px">22</div>
<div style="position:absolute;left:5px;top:219.00px;width:152px;height:11.00px;background:#f0faf0"></div>
<div style="position:absolute;left:5px;top:231.90px;width:152px;height:1px;background:#e6e6e6"></div>
<div style="position:absolute;left:62px;top:219.00px;width:1px;height:11.00px;background:#e0e0e0"></div>
<div style="position:absolute;left:100px;top:219.00px;width:1px;height:11.00px;background:#e0e0e0"></div>
<div style="position:absolute;left:137px;top:219.00px;width:1px;height:11.00px;background:#e0e0e0"></div>
<svg style="left:9px;top:223.00px" width="7" height="6" viewBox="0 0 7 6"><path d="M2 0.3 H5 V2.6 H6.7 L3.5 5.8 L0.3 2.6 H2 Z" fill="#e85a28" stroke="#a83a10" stroke-width="0.5"/></svg>
<div class="t" style="left:19.5px;top:221.4px;font-size:8.3px;color:#222;letter-spacing:-0.6px">AUDJPY</div>
<div class="t" style="left:62px;top:221.4px;font-size:8.3px;color:#ff2020;width:35.5px;text-align:right;letter-spacing:-0.3px">72.456</div>
<div class="t" style="left:100px;top:221.4px;font-size:8.3px;color:#ff2020;width:35px;text-align:right;letter-spacing:-0.3px">72.470</div>
<div class="t" style="left:137px;top:221.4px;font-size:8.3px;color:#ff2020;width:16.5px;text-align:right;letter-spacing:-0.3px">14</div>
<div style="position:absolute;left:157px;top:62px;width:13px;height:168px;background:#f4f4f4"></div>
<svg style="left:159px;top:67px" width="9" height="5"><path d="M0.5 4.5 L4.5 0.5 L8.5 4.5Z" fill="#606060"/></svg>
<div style="position:absolute;left:158px;top:76px;width:9.5px;height:18px;background:linear-gradient(90deg,#eaeaea,#f8f8f8 50%,#e0e0e0);border:1px solid #c4c4c4;border-radius:2px;box-sizing:border-box"></div>
<div style="position:absolute;left:160.5px;top:82.5px;width:5px;height:1px;background:#707070"></div>
<div style="position:absolute;left:160.5px;top:84.5px;width:5px;height:1px;background:#707070"></div>
<div style="position:absolute;left:160.5px;top:86.5px;width:5px;height:1px;background:#707070"></div>
<svg style="left:160px;top:224px" width="7" height="4"><path d="M0 0 L7 0 L3.5 3.5Z" fill="#808080"/></svg>
<div style="position:absolute;left:5px;top:230px;width:165px;height:1px;background:#505050"></div>
<div style="position:absolute;left:7px;top:230px;width:51px;height:15px;background:#fff;border:1px solid #404040;border-top:none;box-sizing:border-box;border-radius:0 0 2px 2px"></div>
<div class="t" style="left:14px;top:233.8px;font-size:8.2px;color:#222;">Символы</div>
<div class="t" style="left:64.5px;top:233.8px;font-size:8.2px;color:#888;">Тиковый график</div>
<div style="position:absolute;left:135px;top:232px;width:1px;height:11px;background:#909090"></div>
<div style="position:absolute;left:5px;top:246px;width:166px;height:1px;background:#e4e4e4"></div>
<div style="position:absolute;left:5px;top:250px;width:155px;height:9px;background:#383838"></div>
<div class="t" style="left:7px;top:250.8px;font-size:7.9px;color:#e8e8e8;">Навигатор</div>
<svg style="left:162px;top:251px" width="7" height="7" viewBox="0 0 7 7"><path d="M1.3 1.3 L5.7 5.7 M5.7 1.3 L1.3 5.7" stroke="#222" stroke-width="1.15"/></svg>
<div style="position:absolute;left:5px;top:259px;width:152px;height:138px;background:#fff"></div>
<svg style="left:0;top:0" width="1000" height="597" shape-rendering="crispEdges">
<path d="M15.5 259 V397 M29.5 259 V393" stroke="#b8b8b8" stroke-width="1" stroke-dasharray="1 1"/>
<path d="M30 267.5 H37" stroke="#b8b8b8" stroke-width="1" stroke-dasharray="1 1"/>
<path d="M30 279.5 H37" stroke="#b8b8b8" stroke-width="1" stroke-dasharray="1 1"/>
<path d="M30 292.5 H37" stroke="#b8b8b8" stroke-width="1" stroke-dasharray="1 1"/>
<path d="M30 304.5 H37" stroke="#b8b8b8" stroke-width="1" stroke-dasharray="1 1"/>
<path d="M30 317.5 H37" stroke="#b8b8b8" stroke-width="1" stroke-dasharray="1 1"/>
<path d="M30 329.5 H37" stroke="#b8b8b8" stroke-width="1" stroke-dasharray="1 1"/>
<path d="M30 342.5 H37" stroke="#b8b8b8" stroke-width="1" stroke-dasharray="1 1"/>
<path d="M30 354.5 H37" stroke="#b8b8b8" stroke-width="1" stroke-dasharray="1 1"/>
<path d="M30 367.5 H37" stroke="#b8b8b8" stroke-width="1" stroke-dasharray="1 1"/>
<path d="M30 379.5 H37" stroke="#b8b8b8" stroke-width="1" stroke-dasharray="1 1"/>
<path d="M30 392.5 H37" stroke="#b8b8b8" stroke-width="1" stroke-dasharray="1 1"/>
</svg>
<svg style="left:38px;top:262.0px" width="11" height="11" viewBox="0 0 11 11">
<rect x="0.5" y="0.5" width="9" height="9" rx="1.5" fill="#f2dc6a" stroke="#c8a838" stroke-width="0.8"/>
<path d="M6.5 2 Q4.5 1.5 4.3 4 L3.8 8 M3 4.8 H6" stroke="#705818" stroke-width="0.9" fill="none"/>
<circle cx="8.3" cy="8.3" r="2" fill="#f0c838" stroke="#b89018" stroke-width="0.6"/>
</svg>
<div class="t" style="left:53.2px;top:263.5px;font-size:8.3px;color:#1a1a1a;">HighLow AM2</div>
<svg style="left:38px;top:274.5px" width="11" height="11" viewBox="0 0 11 11">
<rect x="0.5" y="0.5" width="9" height="9" rx="1.5" fill="#f2dc6a" stroke="#c8a838" stroke-width="0.8"/>
<path d="M6.5 2 Q4.5 1.5 4.3 4 L3.8 8 M3 4.8 H6" stroke="#705818" stroke-width="0.9" fill="none"/>
<circle cx="8.3" cy="8.3" r="2" fill="#f0c838" stroke="#b89018" stroke-width="0.6"/>
</svg>
<div class="t" style="left:53.2px;top:276.0px;font-size:8.3px;color:#1a1a1a;">HighLow2</div>
<svg style="left:38px;top:287.0px" width="11" height="11" viewBox="0 0 11 11">
<rect x="0.5" y="0.5" width="9" height="9" rx="1.5" fill="#f2dc6a" stroke="#c8a838" stroke-width="0.8"/>
<path d="M6.5 2 Q4.5 1.5 4.3 4 L3.8 8 M3 4.8 H6" stroke="#705818" stroke-width="0.9" fill="none"/>
<circle cx="8.3" cy="8.3" r="2" fill="#f0c838" stroke="#b89018" stroke-width="0.6"/>
</svg>
<div class="t" style="left:53.2px;top:288.5px;font-size:8.3px;color:#1a1a1a;">HiLow</div>
<svg style="left:38px;top:299.5px" width="11" height="11" viewBox="0 0 11 11">
<rect x="0.5" y="0.5" width="9" height="9" rx="1.5" fill="#f2dc6a" stroke="#c8a838" stroke-width="0.8"/>
<path d="M6.5 2 Q4.5 1.5 4.3 4 L3.8 8 M3 4.8 H6" stroke="#705818" stroke-width="0.9" fill="none"/>
<circle cx="8.3" cy="8.3" r="2" fill="#f0c838" stroke="#b89018" stroke-width="0.6"/>
</svg>
<div class="t" style="left:53.2px;top:301.0px;font-size:8.3px;color:#1a1a1a;letter-spacing:-0.25px">Hist_StepMA_Stoch_KV1_Ex_</div>
<svg style="left:38px;top:312.0px" width="11" height="11" viewBox="0 0 11 11">
<rect x="0.5" y="0.5" width="9" height="9" rx="1.5" fill="#f2dc6a" stroke="#c8a838" stroke-width="0.8"/>
<path d="M6.5 2 Q4.5 1.5 4.3 4 L3.8 8 M3 4.8 H6" stroke="#705818" stroke-width="0.9" fill="none"/>
<circle cx="8.3" cy="8.3" r="2" fill="#f0c838" stroke="#b89018" stroke-width="0.6"/>
</svg>
<div class="t" style="left:53.2px;top:313.5px;font-size:8.3px;color:#1a1a1a;">HL</div>
<svg style="left:38px;top:324.5px" width="11" height="11" viewBox="0 0 11 11">
<rect x="0.5" y="0.5" width="9" height="9" rx="1.5" fill="#f2dc6a" stroke="#c8a838" stroke-width="0.8"/>
<path d="M6.5 2 Q4.5 1.5 4.3 4 L3.8 8 M3 4.8 H6" stroke="#705818" stroke-width="0.9" fill="none"/>
<circle cx="8.3" cy="8.3" r="2" fill="#f0c838" stroke="#b89018" stroke-width="0.6"/>
</svg>
<div class="t" style="left:53.2px;top:326.0px;font-size:8.3px;color:#1a1a1a;">HMA Arrows</div>
<svg style="left:38px;top:337.0px" width="11" height="11" viewBox="0 0 11 11">
<rect x="0.5" y="0.5" width="9" height="9" rx="1.5" fill="#f2dc6a" stroke="#c8a838" stroke-width="0.8"/>
<path d="M6.5 2 Q4.5 1.5 4.3 4 L3.8 8 M3 4.8 H6" stroke="#705818" stroke-width="0.9" fill="none"/>
<circle cx="8.3" cy="8.3" r="2" fill="#f0c838" stroke="#b89018" stroke-width="0.6"/>
</svg>
<div class="t" style="left:53.2px;top:338.5px;font-size:8.3px;color:#1a1a1a;">HMA Color</div>
<svg style="left:38px;top:349.5px" width="11" height="11" viewBox="0 0 11 11">
<rect x="0.5" y="0.5" width="9" height="9" rx="1.5" fill="#f2dc6a" stroke="#c8a838" stroke-width="0.8"/>
<path d="M6.5 2 Q4.5 1.5 4.3 4 L3.8 8 M3 4.8 H6" stroke="#705818" stroke-width="0.9" fill="none"/>
<circle cx="8.3" cy="8.3" r="2" fill="#909090" stroke="#606060" stroke-width="0.6"/>
</svg>
<div class="t" style="left:53.2px;top:351.0px;font-size:8.3px;color:#1a1a1a;">HOLY GRAIL 1.6</div>
<svg style="left:38px;top:362.0px" width="11" height="11" viewBox="0 0 11 11">
<rect x="0.5" y="0.5" width="9" height="9" rx="1.5" fill="#f2dc6a" stroke="#c8a838" stroke-width="0.8"/>
<path d="M6.5 2 Q4.5 1.5 4.3 4 L3.8 8 M3 4.8 H6" stroke="#705818" stroke-width="0.9" fill="none"/>
<circle cx="8.3" cy="8.3" r="2" fill="#f0c838" stroke="#b89018" stroke-width="0.6"/>
</svg>
<div class="t" style="left:53.2px;top:363.5px;font-size:8.3px;color:#1a1a1a;">HorizontalTrendLines</div>
<svg style="left:38px;top:374.5px" width="11" height="11" viewBox="0 0 11 11">
<rect x="0.5" y="0.5" width="9" height="9" rx="1.5" fill="#f2dc6a" stroke="#c8a838" stroke-width="0.8"/>
<path d="M6.5 2 Q4.5 1.5 4.3 4 L3.8 8 M3 4.8 H6" stroke="#705818" stroke-width="0.9" fill="none"/>
<circle cx="8.3" cy="8.3" r="2" fill="#f0c838" stroke="#b89018" stroke-width="0.6"/>
</svg>
<div class="t" style="left:53.2px;top:376.0px;font-size:8.3px;color:#1a1a1a;">i-Regr indikator</div>
<svg style="left:38px;top:387.0px" width="11" height="11" viewBox="0 0 11 11">
<rect x="0.5" y="0.5" width="9" height="9" rx="1.5" fill="#f2dc6a" stroke="#c8a838" stroke-width="0.8"/>
<path d="M6.5 2 Q4.5 1.5 4.3 4 L3.8 8 M3 4.8 H6" stroke="#705818" stroke-width="0.9" fill="none"/>
<circle cx="8.3" cy="8.3" r="2" fill="#f0c838" stroke="#b89018" stroke-width="0.6"/>
</svg>
<div class="t" style="left:53.2px;top:388.5px;font-size:8.3px;color:#1a1a1a;">i-Sessions</div>
<div style="position:absolute;left:157px;top:259px;width:13px;height:138px;background:#f4f4f4"></div>
<svg style="left:159px;top:265px" width="9" height="5"><path d="M0.5 4.5 L4.5 0.5 L8.5 4.5Z" fill="#808080"/></svg>
<div style="position:absolute;left:158px;top:295.5px;width:9.5px;height:10px;background:linear-gradient(90deg,#eaeaea,#f8f8f8 50%,#e0e0e0);border:1px solid #c4c4c4;border-radius:2px;box-sizing:border-box"></div>
<svg style="left:160px;top:390px" width="7" height="4"><path d="M0 0 L7 0 L3.5 3.5Z" fill="#808080"/></svg>
<div style="position:absolute;left:5px;top:397px;width:165px;height:1px;background:#505050"></div>
<div style="position:absolute;left:7px;top:397px;width:42px;height:14px;background:#fff;border:1px solid #404040;border-top:none;box-sizing:border-box;border-radius:0 0 2px 2px"></div>
<div class="t" style="left:13.8px;top:400.6px;font-size:8.2px;color:#222;">Общие</div>
<div class="t" style="left:56px;top:400.6px;font-size:8.2px;color:#888;">Избранное</div>
<div style="position:absolute;left:105px;top:399px;width:1px;height:10px;background:#909090"></div>
<div style="position:absolute;left:3px;top:414px;width:994px;height:1px;background:#d8d8d8"></div>
<div style="position:absolute;left:3px;top:415px;width:994px;height:1px;background:#fff"></div>
<div style="position:absolute;left:171px;top:52px;width:1px;height:348px;background:#c8c8c8"></div>
<div style="position:absolute;left:172px;top:52px;width:824px;height:348px;background:#000"></div>
<svg style="left:0;top:0" width="1000" height="597">
<path d="M197.60 54 V385M219.82 54 V385M242.04 54 V385M264.26 54 V385M286.48 54 V385M308.70 54 V385M330.92 54 V385M353.14 54 V385M375.36 54 V385M397.58 54 V385M419.80 54 V385M442.02 54 V385M464.24 54 V385M486.46 54 V385M508.68 54 V385M530.90 54 V385M553.12 54 V385M575.34 54 V385M597.56 54 V385M619.78 54 V385M642.00 54 V385M664.22 54 V385M686.44 54 V385M708.66 54 V385M730.88 54 V385M753.10 54 V385M775.32 54 V385M797.54 54 V385M819.76 54 V385M841.98 54 V385M864.20 54 V385M886.42 54 V385M908.64 54 V385M930.86 54 V385M953.08 54 V385" stroke="#64707e" stroke-width="1" stroke-dasharray="2 2"/>
<path d="M175 62.60 H964M175 85.52 H964M175 108.44 H964M175 131.36 H964M175 154.28 H964M175 177.20 H964M175 200.12 H964M175 223.04 H964M175 245.96 H964M175 268.88 H964M175 291.80 H964M175 314.72 H964M175 337.64 H964M175 360.56 H964" stroke="#64707e" stroke-width="1" stroke-dasharray="2 2"/>
<path d="M174.5 385.5 V53.5 H964.5 V385.5 Z" stroke="#d8d8d8" stroke-width="1" fill="none" shape-rendering="crispEdges"/>
<path d="M175 168.5 H964" stroke="#8a96a0" stroke-width="1" shape-rendering="crispEdges"/>
<path d="M964 62.5 h3M964 85.5 h3M964 108.5 h3M964 131.5 h3M964 154.5 h3M964 177.5 h3M964 200.5 h3M964 223.5 h3M964 246.5 h3M964 269.5 h3M964 292.5 h3M964 315.5 h3M964 338.5 h3M964 361.5 h3M964 384.5 h3" stroke="#d8d8d8" stroke-width="1" shape-rendering="crispEdges"/>
<path d="M175.5 385 v4M219.5 385 v4M264.5 385 v4M308.5 385 v4M353.5 385 v4M397.5 385 v4M441.5 385 v4M486.5 385 v4M530.5 385 v4M575.5 385 v4M619.5 385 v4M663.5 385 v4M708.5 385 v4M752.5 385 v4M797.5 385 v4" stroke="#d8d8d8" stroke-width="1" shape-rendering="crispEdges"/>
<path d="M457 201.9 L459 206.0 L461 209.9 L463 213.7 L465 217.4 L467 220.9 L469 224.4 L471 227.7 L473 231.0 L475 234.1 L477 237.2 L479 240.1 L481 243.0 L483 245.7 L485 248.3 L487 250.9 L489 253.3 L491 255.7 L493 257.9 L495 260.1 L497 262.1 L499 264.1 L501 266.0 L503 267.7 L505 269.4 L507 271.1 L509 272.6 L511 274.0 L513 275.4 L515 276.7 L517 277.9 L519 279.0 L521 280.0 L523 281.0 L525 281.8 L527 282.6 L529 283.4 L531 284.0 L533 284.6 L535 285.1 L537 285.5 L539 285.9 L541 286.2 L543 286.4 L545 286.6 L547 286.7 L549 286.7 L551 286.7 L553 286.6 L555 286.5 L557 286.3 L559 286.0 L561 285.7 L563 285.3 L565 284.9 L567 284.4 L569 283.9 L571 283.3 L573 282.6 L575 282.0 L577 281.2 L579 280.4 L581 279.6 L583 278.7 L585 277.8 L587 276.9 L589 275.9 L591 274.8 L593 273.7 L595 272.6 L597 271.5 L599 270.3 L601 269.1 L603 267.8 L605 266.5 L607 265.2 L609 263.8 L611 262.5 L613 261.1 L615 259.6 L617 258.2 L619 256.7 L621 255.2 L623 253.6 L625 252.1 L627 250.5 L629 248.9 L631 247.3 L633 245.7 L635 244.1 L637 242.4 L639 240.8 L641 239.1 L643 237.4 L645 235.7 L647 234.0 L649 232.3 L651 230.6 L653 228.8 L655 227.1 L657 225.4 L659 223.6 L661 221.9 L663 220.2 L665 218.4 L667 216.7 L669 215.0 L671 213.3 L673 211.5 L675 209.8 L677 208.1 L679 206.5 L681 204.8 L683 203.1 L685 201.4 L687 199.8 L689 198.2 L691 196.6 L693 195.0 L695 193.4 L697 191.9 L699 190.3 L701 188.8 L703 187.3 L705 185.9 L707 184.4 L709 183.0 L711 181.6 L713 180.3 L715 178.9 L717 177.6 L719 176.4 L721 175.1 L723 173.9 L725 172.8 L727 171.7 L729 170.6 L731 169.5 L733 168.5 L735 167.5 L737 166.6 L739 165.7 L741 164.9 L743 164.1 L745 163.3 L747 162.6 L749 162.0 L751 161.4 L753 160.8 L755 160.3 L757 159.9 L759 159.5 L761 159.2 L763 158.9 L765 158.7 L767 158.5 L769 158.4 L771 158.4 L773 158.4 L775 158.5 L777 158.6 L779 158.9 L781 159.1 L783 159.5 L785 159.9 L787 160.4 L789 161.0 L791 161.6 L793 162.3 L795 163.1 L797 163.9 L799 164.9 L801 165.9 L803 167.0 L805 168.2" stroke="#20b020" stroke-width="1" fill="none"/>
<path d="M457 120.9 L459 125.0 L461 128.9 L463 132.7 L465 136.4 L467 139.9 L469 143.4 L471 146.7 L473 150.0 L475 153.1 L477 156.2 L479 159.1 L481 162.0 L483 164.7 L485 167.3 L487 169.9 L489 172.3 L491 174.7 L493 176.9 L495 179.1 L497 181.1 L499 183.1 L501 185.0 L503 186.7 L505 188.4 L507 190.1 L509 191.6 L511 193.0 L513 194.4 L515 195.7 L517 196.9 L519 198.0 L521 199.0 L523 200.0 L525 200.8 L527 201.6 L529 202.4 L531 203.0 L533 203.6 L535 204.1 L537 204.5 L539 204.9 L541 205.2 L543 205.4 L545 205.6 L547 205.7 L549 205.7 L551 205.7 L553 205.6 L555 205.5 L557 205.3 L559 205.0 L561 204.7 L563 204.3 L565 203.9 L567 203.4 L569 202.9 L571 202.3 L573 201.6 L575 201.0 L577 200.2 L579 199.4 L581 198.6 L583 197.7 L585 196.8 L587 195.9 L589 194.9 L591 193.8 L593 192.7 L595 191.6 L597 190.5 L599 189.3 L601 188.1 L603 186.8 L605 185.5 L607 184.2 L609 182.8 L611 181.5 L613 180.1 L615 178.6 L617 177.2 L619 175.7 L621 174.2 L623 172.6 L625 171.1 L627 169.5 L629 167.9 L631 166.3 L633 164.7 L635 163.1 L637 161.4 L639 159.8 L641 158.1 L643 156.4 L645 154.7 L647 153.0 L649 151.3 L651 149.6 L653 147.8 L655 146.1 L657 144.4 L659 142.6 L661 140.9 L663 139.2 L665 137.4 L667 135.7 L669 134.0 L671 132.3 L673 130.5 L675 128.8 L677 127.1 L679 125.5 L681 123.8 L683 122.1 L685 120.4 L687 118.8 L689 117.2 L691 115.6 L693 114.0 L695 112.4 L697 110.9 L699 109.3 L701 107.8 L703 106.3 L705 104.9 L707 103.4 L709 102.0 L711 100.6 L713 99.3 L715 97.9 L717 96.6 L719 95.4 L721 94.1 L723 92.9 L725 91.8 L727 90.7 L729 89.6 L731 88.5 L733 87.5 L735 86.5 L737 85.6 L739 84.7 L741 83.9 L743 83.1 L745 82.3 L747 81.6 L749 81.0 L751 80.4 L753 79.8 L755 79.3 L757 78.9 L759 78.5 L761 78.2 L763 77.9 L765 77.7 L767 77.5 L769 77.4 L771 77.4 L773 77.4 L775 77.5 L777 77.6 L779 77.9 L781 78.1 L783 78.5 L785 78.9 L787 79.4 L789 80.0 L791 80.6 L793 81.3 L795 82.1 L797 82.9 L799 83.9 L801 84.9 L803 86.0 L805 87.2" stroke="#d0a020" stroke-width="1" fill="none"/>
<path d="M457 281.9 L459 286.0 L461 289.9 L463 293.7 L465 297.4 L467 300.9 L469 304.4 L471 307.7 L473 311.0 L475 314.1 L477 317.2 L479 320.1 L481 323.0 L483 325.7 L485 328.3 L487 330.9 L489 333.3 L491 335.7 L493 337.9 L495 340.1 L497 342.1 L499 344.1 L501 346.0 L503 347.7 L505 349.4 L507 351.1 L509 352.6 L511 354.0 L513 355.4 L515 356.7 L517 357.9 L519 359.0 L521 360.0 L523 361.0 L525 361.8 L527 362.6 L529 363.4 L531 364.0 L533 364.6 L535 365.1 L537 365.5 L539 365.9 L541 366.2 L543 366.4 L545 366.6 L547 366.7 L549 366.7 L551 366.7 L553 366.6 L555 366.5 L557 366.3 L559 366.0 L561 365.7 L563 365.3 L565 364.9 L567 364.4 L569 363.9 L571 363.3 L573 362.6 L575 362.0 L577 361.2 L579 360.4 L581 359.6 L583 358.7 L585 357.8 L587 356.9 L589 355.9 L591 354.8 L593 353.7 L595 352.6 L597 351.5 L599 350.3 L601 349.1 L603 347.8 L605 346.5 L607 345.2 L609 343.8 L611 342.5 L613 341.1 L615 339.6 L617 338.2 L619 336.7 L621 335.2 L623 333.6 L625 332.1 L627 330.5 L629 328.9 L631 327.3 L633 325.7 L635 324.1 L637 322.4 L639 320.8 L641 319.1 L643 317.4 L645 315.7 L647 314.0 L649 312.3 L651 310.6 L653 308.8 L655 307.1 L657 305.4 L659 303.6 L661 301.9 L663 300.2 L665 298.4 L667 296.7 L669 295.0 L671 293.3 L673 291.5 L675 289.8 L677 288.1 L679 286.5 L681 284.8 L683 283.1 L685 281.4 L687 279.8 L689 278.2 L691 276.6 L693 275.0 L695 273.4 L697 271.9 L699 270.3 L701 268.8 L703 267.3 L705 265.9 L707 264.4 L709 263.0 L711 261.6 L713 260.3 L715 258.9 L717 257.6 L719 256.4 L721 255.1 L723 253.9 L725 252.8 L727 251.7 L729 250.6 L731 249.5 L733 248.5 L735 247.5 L737 246.6 L739 245.7 L741 244.9 L743 244.1 L745 243.3 L747 242.6 L749 242.0 L751 241.4 L753 240.8 L755 240.3 L757 239.9 L759 239.5 L761 239.2 L763 238.9 L765 238.7 L767 238.5 L769 238.4 L771 238.4 L773 238.4 L775 238.5 L777 238.6 L779 238.9 L781 239.1 L783 239.5 L785 239.9 L787 240.4 L789 241.0 L791 241.6 L793 242.3 L795 243.1 L797 243.9 L799 244.9 L801 245.9 L803 247.0 L805 248.2" stroke="#d0a020" stroke-width="1" fill="none"/>
<path d="M186 125 L232 130" stroke="#2a36d8" stroke-width="0.9" stroke-dasharray="1.6 2" fill="none"/>
<path d="M191 151.5 L232 130" stroke="#2a36d8" stroke-width="0.9" stroke-dasharray="1.6 2" fill="none"/>
<path d="M176 100 L232 130" stroke="#2a36d8" stroke-width="0.9" stroke-dasharray="1.6 2" fill="none"/>
<path d="M358 205 L392 236" stroke="#2a36d8" stroke-width="0.9" stroke-dasharray="1.6 2" fill="none"/>
<path d="M361 230 L392 236" stroke="#2a36d8" stroke-width="0.9" stroke-dasharray="1.6 2" fill="none"/>
<path d="M384.7 254 L392 236" stroke="#2a36d8" stroke-width="0.9" stroke-dasharray="1.6 2" fill="none"/>
<path d="M552.7 231 L589.5 347.7" stroke="#2a36d8" stroke-width="0.9" stroke-dasharray="1.6 2" fill="none"/>
<path d="M562 256 L589.5 347.7" stroke="#2a36d8" stroke-width="0.9" stroke-dasharray="1.6 2" fill="none"/>
<path d="M574 346 L597 342" stroke="#2a36d8" stroke-width="0.9" stroke-dasharray="1.6 2" fill="none"/>
<path d="M586 370 L597 342" stroke="#2a36d8" stroke-width="0.9" stroke-dasharray="1.6 2" fill="none"/>
<path d="M718 181.7 L726.8 170" stroke="#2a36d8" stroke-width="0.9" stroke-dasharray="1.6 2" fill="none"/>
<path d="M271.5 70.4 L276 99" stroke="#e02020" stroke-width="0.9" stroke-dasharray="1.6 2" fill="none"/>
<path d="M266 96 L277 113" stroke="#e02020" stroke-width="0.9" stroke-dasharray="1.6 2" fill="none"/>
<path d="M242 130.5 L259 143" stroke="#e02020" stroke-width="0.9" stroke-dasharray="1.6 2" fill="none"/>
<path d="M271.5 107 L290.7 119" stroke="#e02020" stroke-width="0.9" stroke-dasharray="1.6 2" fill="none"/>
<path d="M426 198 L433 229" stroke="#e02020" stroke-width="0.9" stroke-dasharray="1.6 2" fill="none"/>
<path d="M674.8 112.6 L678 140" stroke="#e02020" stroke-width="0.9" stroke-dasharray="1.6 2" fill="none"/>
<path d="M672 137 L652 238" stroke="#e02020" stroke-width="0.9" stroke-dasharray="1.6 2" fill="none"/>
<path d="M617 270 L628 305" stroke="#e02020" stroke-width="0.9" stroke-dasharray="1.6 2" fill="none"/>
<path d="M641 254 L654 270" stroke="#e02020" stroke-width="0.9" stroke-dasharray="1.6 2" fill="none"/>
<path d="M655 215 L646.7 272" stroke="#e02020" stroke-width="0.9" stroke-dasharray="1.6 2" fill="none"/>
<circle cx="185.9" cy="125.1" r="6.6" fill="#8e8272" fill-opacity="0.92" stroke="#a0a4aa" stroke-width="0.6"/>
<circle cx="191.4" cy="151.5" r="6.6" fill="#8e8272" fill-opacity="0.92" stroke="#a0a4aa" stroke-width="0.6"/>
<circle cx="358" cy="205" r="6.6" fill="#8e8272" fill-opacity="0.92" stroke="#a0a4aa" stroke-width="0.6"/>
<circle cx="361" cy="230" r="6.6" fill="#8e8272" fill-opacity="0.92" stroke="#a0a4aa" stroke-width="0.6"/>
<circle cx="384.7" cy="254" r="6.6" fill="#8e8272" fill-opacity="0.92" stroke="#a0a4aa" stroke-width="0.6"/>
<circle cx="552.7" cy="231" r="6.6" fill="#8e8272" fill-opacity="0.92" stroke="#a0a4aa" stroke-width="0.6"/>
<circle cx="562" cy="256" r="6.6" fill="#8e8272" fill-opacity="0.92" stroke="#a0a4aa" stroke-width="0.6"/>
<circle cx="566.7" cy="280.6" r="6.6" fill="#8e8272" fill-opacity="0.92" stroke="#a0a4aa" stroke-width="0.6"/>
<circle cx="567.4" cy="297" r="6.6" fill="#8e8272" fill-opacity="0.92" stroke="#a0a4aa" stroke-width="0.6"/>
<circle cx="567.4" cy="309" r="6.6" fill="#8e8272" fill-opacity="0.92" stroke="#a0a4aa" stroke-width="0.6"/>
<circle cx="567.4" cy="321" r="6.6" fill="#8e8272" fill-opacity="0.92" stroke="#a0a4aa" stroke-width="0.6"/>
<circle cx="574" cy="346" r="6.6" fill="#8e8272" fill-opacity="0.92" stroke="#a0a4aa" stroke-width="0.6"/>
<circle cx="586.6" cy="355" r="6.6" fill="#8e8272" fill-opacity="0.92" stroke="#a0a4aa" stroke-width="0.6"/>
<circle cx="586" cy="370" r="6.6" fill="#8e8272" fill-opacity="0.92" stroke="#a0a4aa" stroke-width="0.6"/>
<circle cx="718" cy="181.7" r="6.6" fill="#8e8272" fill-opacity="0.92" stroke="#a0a4aa" stroke-width="0.6"/>
<circle cx="271.5" cy="70.4" r="6.6" fill="#8e8272" fill-opacity="0.92" stroke="#a0a4aa" stroke-width="0.6"/>
<circle cx="266" cy="96" r="6.6" fill="#8e8272" fill-opacity="0.92" stroke="#a0a4aa" stroke-width="0.6"/>
<circle cx="271.5" cy="100" r="6.6" fill="#8e8272" fill-opacity="0.92" stroke="#a0a4aa" stroke-width="0.6"/>
<circle cx="271.5" cy="107" r="6.6" fill="#8e8272" fill-opacity="0.92" stroke="#a0a4aa" stroke-width="0.6"/>
<circle cx="265" cy="128" r="6.6" fill="#8e8272" fill-opacity="0.92" stroke="#a0a4aa" stroke-width="0.6"/>
<circle cx="241.6" cy="130.5" r="6.6" fill="#8e8272" fill-opacity="0.92" stroke="#a0a4aa" stroke-width="0.6"/>
<circle cx="426" cy="198.7" r="6.6" fill="#8e8272" fill-opacity="0.92" stroke="#a0a4aa" stroke-width="0.6"/>
<circle cx="424.5" cy="216" r="6.6" fill="#8e8272" fill-opacity="0.92" stroke="#a0a4aa" stroke-width="0.6"/>
<circle cx="424" cy="223" r="6.6" fill="#8e8272" fill-opacity="0.92" stroke="#a0a4aa" stroke-width="0.6"/>
<circle cx="422.6" cy="231.5" r="6.6" fill="#8e8272" fill-opacity="0.92" stroke="#a0a4aa" stroke-width="0.6"/>
<circle cx="617" cy="270" r="6.6" fill="#8e8272" fill-opacity="0.92" stroke="#a0a4aa" stroke-width="0.6"/>
<circle cx="626" cy="283" r="6.6" fill="#8e8272" fill-opacity="0.92" stroke="#a0a4aa" stroke-width="0.6"/>
<circle cx="619" cy="292" r="6.6" fill="#8e8272" fill-opacity="0.92" stroke="#a0a4aa" stroke-width="0.6"/>
<circle cx="618" cy="298" r="6.6" fill="#8e8272" fill-opacity="0.92" stroke="#a0a4aa" stroke-width="0.6"/>
<circle cx="641" cy="254" r="6.6" fill="#8e8272" fill-opacity="0.92" stroke="#a0a4aa" stroke-width="0.6"/>
<circle cx="645" cy="257" r="6.6" fill="#8e8272" fill-opacity="0.92" stroke="#a0a4aa" stroke-width="0.6"/>
<circle cx="652" cy="241" r="6.6" fill="#8e8272" fill-opacity="0.92" stroke="#a0a4aa" stroke-width="0.6"/>
<circle cx="655" cy="215" r="6.6" fill="#8e8272" fill-opacity="0.92" stroke="#a0a4aa" stroke-width="0.6"/>
<circle cx="657.7" cy="188.7" r="6.6" fill="#8e8272" fill-opacity="0.92" stroke="#a0a4aa" stroke-width="0.6"/>
<circle cx="674.8" cy="112.6" r="6.6" fill="#8e8272" fill-opacity="0.92" stroke="#a0a4aa" stroke-width="0.6"/>
<circle cx="672" cy="137" r="6.6" fill="#8e8272" fill-opacity="0.92" stroke="#a0a4aa" stroke-width="0.6"/>
<circle cx="663" cy="163" r="6.6" fill="#8e8272" fill-opacity="0.92" stroke="#a0a4aa" stroke-width="0.6"/>
<circle cx="232" cy="129.7" r="6.6" fill="#8e8272" fill-opacity="0.92" stroke="#a0a4aa" stroke-width="0.6"/>
<circle cx="259" cy="143" r="6.6" fill="#8e8272" fill-opacity="0.92" stroke="#a0a4aa" stroke-width="0.6"/>
<circle cx="277" cy="113" r="6.6" fill="#8e8272" fill-opacity="0.92" stroke="#a0a4aa" stroke-width="0.6"/>
<circle cx="276" cy="99" r="6.6" fill="#8e8272" fill-opacity="0.92" stroke="#a0a4aa" stroke-width="0.6"/>
<circle cx="290.7" cy="119" r="6.6" fill="#8e8272" fill-opacity="0.92" stroke="#a0a4aa" stroke-width="0.6"/>
<circle cx="392" cy="236" r="6.6" fill="#8e8272" fill-opacity="0.92" stroke="#a0a4aa" stroke-width="0.6"/>
<circle cx="430" cy="218.6" r="6.6" fill="#8e8272" fill-opacity="0.92" stroke="#a0a4aa" stroke-width="0.6"/>
<circle cx="433" cy="229" r="6.6" fill="#8e8272" fill-opacity="0.92" stroke="#a0a4aa" stroke-width="0.6"/>
<circle cx="426" cy="243.7" r="6.6" fill="#8e8272" fill-opacity="0.92" stroke="#a0a4aa" stroke-width="0.6"/>
<circle cx="571" cy="285" r="6.6" fill="#8e8272" fill-opacity="0.92" stroke="#a0a4aa" stroke-width="0.6"/>
<circle cx="597" cy="342" r="6.6" fill="#8e8272" fill-opacity="0.92" stroke="#a0a4aa" stroke-width="0.6"/>
<circle cx="589.5" cy="347.7" r="6.6" fill="#8e8272" fill-opacity="0.92" stroke="#a0a4aa" stroke-width="0.6"/>
<circle cx="628" cy="305" r="6.6" fill="#8e8272" fill-opacity="0.92" stroke="#a0a4aa" stroke-width="0.6"/>
<circle cx="654" cy="270" r="6.6" fill="#8e8272" fill-opacity="0.92" stroke="#a0a4aa" stroke-width="0.6"/>
<circle cx="646.7" cy="272" r="6.6" fill="#8e8272" fill-opacity="0.92" stroke="#a0a4aa" stroke-width="0.6"/>
<circle cx="678" cy="140" r="6.6" fill="#8e8272" fill-opacity="0.92" stroke="#a0a4aa" stroke-width="0.6"/>
<circle cx="726.8" cy="170" r="6.6" fill="#8e8272" fill-opacity="0.92" stroke="#a0a4aa" stroke-width="0.6"/>
<path d="M175.00 93.3V96.3M176.56 94.1V103.3M178.12 99.9V103.1M179.68 94.8V102.9M181.24 94.6V100.1M182.80 95.1V98.7M184.36 94.6V101.9M185.92 95.4V101.0M187.48 100.4V114.2M189.04 112.6V152.6M190.60 127.0V155.7M192.16 140.1V158.2M193.72 141.4V158.5M195.28 142.6V162.3M196.84 156.9V162.0M198.40 150.0V162.6M199.96 151.9V165.3M201.52 156.7V162.4M203.08 149.3V160.9M204.64 148.7V162.8M206.20 157.2V164.6M207.76 157.5V166.5M209.32 156.2V167.9M210.88 156.2V165.2M212.44 155.4V167.8M214.00 153.2V158.6M215.56 151.7V165.0M217.12 148.2V162.4M218.68 147.4V153.0M220.24 147.5V164.2M221.80 158.2V161.3M223.36 153.2V157.7M224.92 150.9V154.2M226.48 139.9V153.2M228.04 135.6V145.2M229.60 135.0V147.6M231.16 142.5V150.5M232.72 145.9V149.1M234.28 135.7V147.2M235.84 135.1V145.2M237.40 134.7V143.2M238.96 136.0V141.2M240.52 123.7V139.7M242.08 124.4V137.2M243.64 133.5V136.5M245.20 122.9V137.4M246.76 120.6V126.5M248.32 119.1V136.2M249.88 118.5V135.1M251.44 118.9V127.3M253.00 124.1V138.5M254.56 126.1V139.3M256.12 121.0V130.6M257.68 133.4V158.1M259.24 145.9V158.3M260.80 145.5V150.0M262.36 135.8V149.9M263.92 138.7V149.4M265.48 131.6V148.8M267.04 130.2V135.6M268.60 107.5V135.0M270.16 79.8V117.2M271.72 82.3V122.6M273.28 99.3V119.8M274.84 98.6V108.6M276.40 98.9V112.6M277.96 91.8V112.8M279.52 85.6V92.7M281.08 86.5V98.0M282.64 90.9V107.9M284.20 103.3V110.8M285.76 99.5V108.8M287.32 96.9V104.6M288.88 95.2V104.6M290.44 96.1V120.6M292.00 100.0V119.7M293.56 105.6V110.8M295.12 111.2V148.7M296.68 133.9V148.4M298.24 137.5V160.9M299.80 130.9V161.9M301.36 136.4V158.0M302.92 144.9V157.6M304.48 143.3V162.2M306.04 157.0V164.8M307.60 156.3V162.6M309.16 136.0V162.9M310.72 136.0V160.3M312.28 155.3V160.5M313.84 143.0V159.8M315.40 141.3V153.0M316.96 144.9V151.4M318.52 145.5V154.2M320.08 136.0V155.4M321.64 137.3V140.3M323.20 134.6V147.5M324.76 144.9V147.9M326.32 136.8V151.3M327.88 135.5V156.0M329.44 140.6V158.0M331.00 140.5V163.0M332.56 147.5V164.9M334.12 148.9V151.9M335.68 144.5V155.3M337.24 146.9V149.9M338.80 149.2V152.2M340.36 151.5V154.5M341.92 153.9V170.9M343.48 167.0V172.5M345.04 158.6V173.0M346.60 160.8V175.4M348.16 170.0V178.0M349.72 173.9V177.8M351.28 173.3V188.0M352.84 184.6V191.2M354.40 182.2V189.5M355.96 182.5V195.3M357.52 181.5V197.1M359.08 185.4V194.8M360.64 193.2V220.0M362.20 213.2V232.5M363.76 215.5V228.9M365.32 215.9V229.8M366.88 218.6V229.7M368.44 217.2V230.3M370.00 223.6V240.9M371.56 227.3V239.6M373.12 229.3V238.7M374.68 232.5V240.5M376.24 227.3V239.4M377.80 222.0V231.7M379.36 222.0V236.8M380.92 228.6V242.3M382.48 239.1V247.2M384.04 231.3V248.4M385.60 222.0V236.3M387.16 222.5V229.2M388.72 223.2V235.1M390.28 227.1V239.7M391.84 234.8V244.7M393.40 230.5V247.4M394.96 226.7V236.6M396.52 228.5V245.0M398.08 227.2V244.5M399.64 227.8V236.2M401.20 228.7V235.2M402.76 229.4V234.0M404.32 230.2V233.7M405.88 230.9V238.3M407.44 233.5V240.2M409.00 239.1V248.7M410.56 242.3V247.2M412.12 234.0V245.8M413.68 235.7V243.3M415.24 234.6V245.7M416.80 235.7V241.9M418.36 235.3V243.0M419.92 235.8V239.5M421.48 235.6V239.6M423.04 235.8V252.0M424.60 245.4V250.8M426.16 232.6V251.2M427.72 223.2V277.2M429.28 239.5V253.8M430.84 238.9V243.5M432.40 240.7V243.7M433.96 232.0V245.4M435.52 232.0V246.3M437.08 237.5V246.4M438.64 234.5V245.1M440.20 228.0V246.6M441.76 228.4V233.9M443.32 228.7V246.8M444.88 244.3V251.9M446.44 229.9V249.1M448.00 230.8V243.7M449.56 234.7V241.4M451.12 235.4V243.1M452.68 235.0V248.6M454.24 247.3V250.3M455.80 243.4V252.0M457.36 246.2V253.6M458.92 246.5V262.0M460.48 247.9V258.5M462.04 248.8V257.3M463.60 244.8V258.4M465.16 245.1V252.4M466.72 245.6V258.3M468.28 253.5V257.8M469.84 249.8V259.8M471.40 252.4V269.9M472.96 264.1V269.2M474.52 246.5V266.1M476.08 246.8V249.8M477.64 247.1V265.5M479.20 256.7V264.2M480.76 252.3V261.2M482.32 248.5V256.1M483.88 249.4V252.4M485.44 250.6V255.5M487.00 251.8V257.2M488.56 254.5V270.2M490.12 255.1V269.6M491.68 257.3V267.5M493.24 257.4V267.6M494.80 252.7V262.2M496.36 243.2V260.4M497.92 238.9V259.3M499.48 241.4V258.9M501.04 236.8V259.5M502.60 239.7V257.6M504.16 238.5V250.8M505.72 234.5V250.0M507.28 236.5V249.8M508.84 231.6V249.3M510.40 231.9V238.8M511.96 233.2V251.6M513.52 245.2V252.1M515.08 230.7V251.4M516.64 232.1V241.3M518.20 236.8V248.3M519.76 238.4V248.0M521.32 228.9V240.9M522.88 230.6V244.6M524.44 234.3V242.1M526.00 222.5V239.8M527.56 223.3V237.3M529.12 217.7V238.3M530.68 217.4V231.0M532.24 225.0V233.4M533.80 226.3V235.4M535.36 222.4V235.5M536.92 222.9V231.5M538.48 227.9V231.6M540.04 216.0V230.1M541.60 216.3V232.6M543.16 221.5V233.0M544.72 218.7V225.1M546.28 217.8V229.8M547.84 219.0V227.1M549.40 217.8V224.7M550.96 219.6V226.1M552.52 219.4V226.9M554.08 220.7V234.1M555.64 230.4V235.9M557.20 233.2V237.8M558.76 234.2V237.8M560.32 235.9V238.9M561.88 235.2V241.7M563.44 238.3V243.1M565.00 241.3V251.2M566.56 249.5V276.2M568.12 268.8V303.4M569.68 267.3V307.3M571.24 284.2V316.7M572.80 313.4V328.2M574.36 315.7V325.2M575.92 323.0V369.0M577.48 352.8V370.7M579.04 352.1V361.9M580.60 348.7V364.7M582.16 349.9V367.1M583.72 350.9V360.1M585.28 351.6V359.1M586.84 349.1V355.5M588.40 346.4V359.0M589.96 346.7V363.2M591.52 344.0V365.8M593.08 339.5V377.5M594.64 365.7V377.2M596.20 356.6V374.9M597.76 331.5V358.5M599.32 302.7V335.7M600.88 303.4V309.2M602.44 302.5V319.5M604.00 309.7V312.7M605.56 303.8V315.6M607.12 302.0V317.7M608.68 301.3V312.7M610.24 285.9V318.3M611.80 288.3V324.7M613.36 316.5V323.5M614.92 297.1V322.2M616.48 285.0V306.7M618.04 285.6V316.9M619.60 304.7V316.8M621.16 284.7V312.4M622.72 281.4V297.1M624.28 287.3V302.8M625.84 284.5V301.0M627.40 272.2V301.1M628.96 271.5V291.4M630.52 279.2V290.3M632.08 277.9V286.9M633.64 274.5V288.7M635.20 262.9V282.7M636.76 261.6V274.4M638.32 265.6V276.2M639.88 260.1V266.0M641.44 263.3V277.4M643.00 258.5V276.8M644.56 257.7V279.3M646.12 265.1V279.9M647.68 267.3V280.1M649.24 265.3V275.4M650.80 265.5V274.2M652.36 248.0V271.3M653.92 229.1V255.2M655.48 229.9V239.0M657.04 208.3V243.0M658.60 200.7V236.5M660.16 196.5V237.8M661.72 199.3V209.6M663.28 184.9V208.3M664.84 176.6V202.1M666.40 183.0V207.0M667.96 176.5V208.5M669.52 176.5V200.5M671.08 135.2V191.4M672.64 134.4V157.8M674.20 115.6V161.3M675.76 114.0V163.2M677.32 153.6V167.2M678.88 129.5V166.5M680.44 132.8V160.6M682.00 150.9V156.7M683.56 139.9V161.8M685.12 141.9V170.1M686.68 161.2V176.1M688.24 159.0V185.6M689.80 170.4V199.3M691.36 184.2V192.7M692.92 174.1V193.0M694.48 176.2V195.2M696.04 149.9V193.5M697.60 148.9V181.5M699.16 151.3V175.9M700.72 151.0V176.1M702.28 149.0V172.9M703.84 149.3V174.0M705.40 152.1V170.9M706.96 150.0V163.2M708.52 150.7V176.9M710.08 149.4V173.9M711.64 151.7V177.9M713.20 167.4V178.0M714.76 158.9V177.4M716.32 148.3V164.5M717.88 148.0V154.3M719.44 151.7V170.0M721.00 166.3V171.6M722.56 164.1V187.1M724.12 172.5V187.7M725.68 166.2V178.8M727.24 164.0V174.9M728.80 121.3V169.2M730.36 124.7V163.4M731.92 131.3V161.6M733.48 137.8V157.2M735.04 148.2V159.2M736.60 142.6V154.3M738.16 144.2V155.9M739.72 145.7V158.6M741.28 147.3V165.3M742.84 160.1V167.3M744.40 143.2V164.1M745.96 141.2V162.0M747.52 152.6V164.4M749.08 157.8V165.3M750.64 139.9V166.6M752.20 142.7V154.6M753.76 145.0V154.7M755.32 139.8V172.3M756.88 166.7V176.8M758.44 144.0V174.7M760.00 147.0V156.8M761.56 143.9V163.5M763.12 160.1V170.0M764.68 164.9V177.4M766.24 172.9V182.8M767.80 180.0V187.2M769.36 181.8V190.6M770.92 182.9V195.1M772.48 175.7V193.5M774.04 177.3V180.3M775.60 170.4V182.5M777.16 169.6V188.0M778.72 183.3V188.3M780.28 178.2V187.2M781.84 180.3V186.9M783.40 175.9V184.5M784.96 178.4V185.7M786.52 180.2V188.2M788.08 176.4V188.0M789.64 165.7V182.4M791.20 164.8V184.8M792.76 182.3V185.4M794.32 182.5V185.5M795.88 179.9V184.1M797.44 150.5V173.9M799.00 151.1V169.5M800.56 157.4V168.7M802.12 155.6V164.2M803.68 161.4V168.0M805.24 163.6V167.1M189 103V155M270.5 70V126M427.5 184V288M567 262V300M568.5 275V322M570 290V345M572 312V352M574 318V366M595 325V377M675.5 111V158M729.5 119V165M758.5 130V190M798 141V170" stroke="#00d400" stroke-width="1.1" fill="none"/>
<path d="M185.9 122.1 L188.9 125.1 L185.9 128.1 L182.9 125.1Z" fill="#1020ff" stroke="#fff" stroke-width="0.7"/>
<path d="M191.4 148.5 L194.4 151.5 L191.4 154.5 L188.4 151.5Z" fill="#1020ff" stroke="#fff" stroke-width="0.7"/>
<path d="M358 202 L361 205 L358 208 L355 205Z" fill="#1020ff" stroke="#fff" stroke-width="0.7"/>
<path d="M361 227 L364 230 L361 233 L358 230Z" fill="#1020ff" stroke="#fff" stroke-width="0.7"/>
<path d="M384.7 251 L387.7 254 L384.7 257 L381.7 254Z" fill="#1020ff" stroke="#fff" stroke-width="0.7"/>
<path d="M552.7 228 L555.7 231 L552.7 234 L549.7 231Z" fill="#1020ff" stroke="#fff" stroke-width="0.7"/>
<path d="M562 253 L565 256 L562 259 L559 256Z" fill="#1020ff" stroke="#fff" stroke-width="0.7"/>
<path d="M566.7 277.6 L569.7 280.6 L566.7 283.6 L563.7 280.6Z" fill="#1020ff" stroke="#fff" stroke-width="0.7"/>
<path d="M567.4 294 L570.4 297 L567.4 300 L564.4 297Z" fill="#1020ff" stroke="#fff" stroke-width="0.7"/>
<path d="M567.4 306 L570.4 309 L567.4 312 L564.4 309Z" fill="#1020ff" stroke="#fff" stroke-width="0.7"/>
<path d="M567.4 318 L570.4 321 L567.4 324 L564.4 321Z" fill="#1020ff" stroke="#fff" stroke-width="0.7"/>
<path d="M574 343 L577 346 L574 349 L571 346Z" fill="#1020ff" stroke="#fff" stroke-width="0.7"/>
<path d="M586.6 352 L589.6 355 L586.6 358 L583.6 355Z" fill="#1020ff" stroke="#fff" stroke-width="0.7"/>
<path d="M586 367 L589 370 L586 373 L583 370Z" fill="#1020ff" stroke="#fff" stroke-width="0.7"/>
<path d="M718 178.7 L721 181.7 L718 184.7 L715 181.7Z" fill="#1020ff" stroke="#fff" stroke-width="0.7"/>
<path d="M271.5 67.4 L274.5 70.4 L271.5 73.4 L268.5 70.4Z" fill="#ff1010" stroke="#fff" stroke-width="0.7"/>
<path d="M266 93 L269 96 L266 99 L263 96Z" fill="#ff1010" stroke="#fff" stroke-width="0.7"/>
<path d="M271.5 97 L274.5 100 L271.5 103 L268.5 100Z" fill="#ff1010" stroke="#fff" stroke-width="0.7"/>
<path d="M271.5 104 L274.5 107 L271.5 110 L268.5 107Z" fill="#ff1010" stroke="#fff" stroke-width="0.7"/>
<path d="M265 125 L268 128 L265 131 L262 128Z" fill="#ff1010" stroke="#fff" stroke-width="0.7"/>
<path d="M241.6 127.5 L244.6 130.5 L241.6 133.5 L238.6 130.5Z" fill="#ff1010" stroke="#fff" stroke-width="0.7"/>
<path d="M426 195.7 L429 198.7 L426 201.7 L423 198.7Z" fill="#ff1010" stroke="#fff" stroke-width="0.7"/>
<path d="M424.5 213 L427.5 216 L424.5 219 L421.5 216Z" fill="#ff1010" stroke="#fff" stroke-width="0.7"/>
<path d="M424 220 L427 223 L424 226 L421 223Z" fill="#ff1010" stroke="#fff" stroke-width="0.7"/>
<path d="M422.6 228.5 L425.6 231.5 L422.6 234.5 L419.6 231.5Z" fill="#ff1010" stroke="#fff" stroke-width="0.7"/>
<path d="M617 267 L620 270 L617 273 L614 270Z" fill="#ff1010" stroke="#fff" stroke-width="0.7"/>
<path d="M626 280 L629 283 L626 286 L623 283Z" fill="#ff1010" stroke="#fff" stroke-width="0.7"/>
<path d="M619 289 L622 292 L619 295 L616 292Z" fill="#ff1010" stroke="#fff" stroke-width="0.7"/>
<path d="M618 295 L621 298 L618 301 L615 298Z" fill="#ff1010" stroke="#fff" stroke-width="0.7"/>
<path d="M641 251 L644 254 L641 257 L638 254Z" fill="#ff1010" stroke="#fff" stroke-width="0.7"/>
<path d="M645 254 L648 257 L645 260 L642 257Z" fill="#ff1010" stroke="#fff" stroke-width="0.7"/>
<path d="M652 238 L655 241 L652 244 L649 241Z" fill="#ff1010" stroke="#fff" stroke-width="0.7"/>
<path d="M655 212 L658 215 L655 218 L652 215Z" fill="#ff1010" stroke="#fff" stroke-width="0.7"/>
<path d="M657.7 185.7 L660.7 188.7 L657.7 191.7 L654.7 188.7Z" fill="#ff1010" stroke="#fff" stroke-width="0.7"/>
<path d="M674.8 109.6 L677.8 112.6 L674.8 115.6 L671.8 112.6Z" fill="#ff1010" stroke="#fff" stroke-width="0.7"/>
<path d="M672 134 L675 137 L672 140 L669 137Z" fill="#ff1010" stroke="#fff" stroke-width="0.7"/>
<path d="M663 160 L666 163 L663 166 L660 163Z" fill="#ff1010" stroke="#fff" stroke-width="0.7"/>
<path d="M234.5 126.19999999999999 L234.5 133.2 L229.5 129.7Z" fill="#f0b020" stroke="#fff" stroke-width="0.6"/>
<path d="M261.5 139.5 L261.5 146.5 L256.5 143Z" fill="#f0b020" stroke="#fff" stroke-width="0.6"/>
<path d="M279.5 109.5 L279.5 116.5 L274.5 113Z" fill="#f0b020" stroke="#fff" stroke-width="0.6"/>
<path d="M278.5 95.5 L278.5 102.5 L273.5 99Z" fill="#f0b020" stroke="#fff" stroke-width="0.6"/>
<path d="M293.2 115.5 L293.2 122.5 L288.2 119Z" fill="#f0b020" stroke="#fff" stroke-width="0.6"/>
<path d="M394.5 232.5 L394.5 239.5 L389.5 236Z" fill="#f0b020" stroke="#fff" stroke-width="0.6"/>
<path d="M432.5 215.1 L432.5 222.1 L427.5 218.6Z" fill="#f0b020" stroke="#fff" stroke-width="0.6"/>
<path d="M435.5 225.5 L435.5 232.5 L430.5 229Z" fill="#f0b020" stroke="#fff" stroke-width="0.6"/>
<path d="M428.5 240.2 L428.5 247.2 L423.5 243.7Z" fill="#f0b020" stroke="#fff" stroke-width="0.6"/>
<path d="M573.5 281.5 L573.5 288.5 L568.5 285Z" fill="#f0b020" stroke="#fff" stroke-width="0.6"/>
<path d="M599.5 338.5 L599.5 345.5 L594.5 342Z" fill="#f0b020" stroke="#fff" stroke-width="0.6"/>
<path d="M592.0 344.2 L592.0 351.2 L587.0 347.7Z" fill="#f0b020" stroke="#fff" stroke-width="0.6"/>
<path d="M630.5 301.5 L630.5 308.5 L625.5 305Z" fill="#f0b020" stroke="#fff" stroke-width="0.6"/>
<path d="M656.5 266.5 L656.5 273.5 L651.5 270Z" fill="#f0b020" stroke="#fff" stroke-width="0.6"/>
<path d="M649.2 268.5 L649.2 275.5 L644.2 272Z" fill="#f0b020" stroke="#fff" stroke-width="0.6"/>
<path d="M680.5 136.5 L680.5 143.5 L675.5 140Z" fill="#f0b020" stroke="#fff" stroke-width="0.6"/>
<path d="M729.3 166.5 L729.3 173.5 L724.3 170Z" fill="#f0b020" stroke="#fff" stroke-width="0.6"/>
<path d="M191 125.5 h5" stroke="#e0c020" stroke-width="1"/>
<path d="M241 144.0 h5" stroke="#e0c020" stroke-width="1"/>
<path d="M262 160.5 h5" stroke="#e0c020" stroke-width="1"/>
<path d="M355 235.5 h5" stroke="#e0c020" stroke-width="1"/>
<path d="M586 340.5 h5" stroke="#e0c020" stroke-width="1"/>
<path d="M618 306.5 h5" stroke="#e0c020" stroke-width="1"/>
<path d="M640 276.5 h5" stroke="#e0c020" stroke-width="1"/>
<path d="M709 172.5 h5" stroke="#e0c020" stroke-width="1"/>
<path d="M234 127.5 h5" stroke="#e0c020" stroke-width="1"/>
</svg>
<svg style="left:801px;top:53px" width="8" height="5"><path d="M0 0 H8 L4 4Z" fill="#708090"/></svg>
<div class="t" style="left:177.5px;top:56.3px;font-size:7.6px;color:#f0f0f0;transform:scaleX(0.866);transform-origin:0 0">EURUSD,H1&nbsp; 1.12021 1.12028 1.11997 1.12004</div>
<div class="t" style="left:968px;top:59.1px;font-size:7.8px;color:#f0f0f0;transform:scaleX(0.82);transform-origin:0 0">1.12885</div>
<div class="t" style="left:968px;top:82.1px;font-size:7.8px;color:#f0f0f0;transform:scaleX(0.82);transform-origin:0 0">1.12695</div>
<div class="t" style="left:968px;top:105.1px;font-size:7.8px;color:#f0f0f0;transform:scaleX(0.82);transform-origin:0 0">1.12500</div>
<div class="t" style="left:968px;top:128.1px;font-size:7.8px;color:#f0f0f0;transform:scaleX(0.82);transform-origin:0 0">1.12310</div>
<div class="t" style="left:968px;top:151.1px;font-size:7.8px;color:#f0f0f0;transform:scaleX(0.82);transform-origin:0 0">1.12120</div>
<div class="t" style="left:968px;top:174.1px;font-size:7.8px;color:#f0f0f0;transform:scaleX(0.82);transform-origin:0 0">1.11930</div>
<div class="t" style="left:968px;top:197.1px;font-size:7.8px;color:#f0f0f0;transform:scaleX(0.82);transform-origin:0 0">1.11740</div>
<div class="t" style="left:968px;top:220.1px;font-size:7.8px;color:#f0f0f0;transform:scaleX(0.82);transform-origin:0 0">1.11550</div>
<div class="t" style="left:968px;top:243.1px;font-size:7.8px;color:#f0f0f0;transform:scaleX(0.82);transform-origin:0 0">1.11360</div>
<div class="t" style="left:968px;top:266.1px;font-size:7.8px;color:#f0f0f0;transform:scaleX(0.82);transform-origin:0 0">1.11165</div>
<div class="t" style="left:968px;top:289.1px;font-size:7.8px;color:#f0f0f0;transform:scaleX(0.82);transform-origin:0 0">1.10975</div>
<div class="t" style="left:968px;top:312.1px;font-size:7.8px;color:#f0f0f0;transform:scaleX(0.82);transform-origin:0 0">1.10785</div>
<div class="t" style="left:968px;top:335.1px;font-size:7.8px;color:#f0f0f0;transform:scaleX(0.82);transform-origin:0 0">1.10595</div>
<div class="t" style="left:968px;top:358.1px;font-size:7.8px;color:#f0f0f0;transform:scaleX(0.82);transform-origin:0 0">1.10405</div>
<div class="t" style="left:968px;top:381.1px;font-size:7.8px;color:#f0f0f0;transform:scaleX(0.82);transform-origin:0 0">1.10215</div>
<div style="position:absolute;left:965px;top:164px;width:29px;height:9px;background:#fff"></div>
<div class="t" style="left:968px;top:164.6px;font-size:7.8px;color:#000;transform:scaleX(0.82);transform-origin:0 0">1.12004</div>
<div class="t" style="left:174.7px;top:388.2px;font-size:7.8px;color:#f0f0f0;transform:scaleX(0.80);transform-origin:0 0">16 Jul 2019</div>
<div class="t" style="left:218.7px;top:388.2px;font-size:7.8px;color:#f0f0f0;transform:scaleX(0.80);transform-origin:0 0">17 Jul 10:00</div>
<div class="t" style="left:263.7px;top:388.2px;font-size:7.8px;color:#f0f0f0;transform:scaleX(0.80);transform-origin:0 0">18 Jul 18:00</div>
<div class="t" style="left:307.7px;top:388.2px;font-size:7.8px;color:#f0f0f0;transform:scaleX(0.80);transform-origin:0 0">22 Jul 02:00</div>
<div class="t" style="left:352.7px;top:388.2px;font-size:7.8px;color:#f0f0f0;transform:scaleX(0.80);transform-origin:0 0">23 Jul 10:00</div>
<div class="t" style="left:396.7px;top:388.2px;font-size:7.8px;color:#f0f0f0;transform:scaleX(0.80);transform-origin:0 0">24 Jul 18:00</div>
<div class="t" style="left:440.7px;top:388.2px;font-size:7.8px;color:#f0f0f0;transform:scaleX(0.80);transform-origin:0 0">26 Jul 02:00</div>
<div class="t" style="left:485.7px;top:388.2px;font-size:7.8px;color:#f0f0f0;transform:scaleX(0.80);transform-origin:0 0">29 Jul 10:00</div>
<div class="t" style="left:529.7px;top:388.2px;font-size:7.8px;color:#f0f0f0;transform:scaleX(0.80);transform-origin:0 0">30 Jul 18:00</div>
<div class="t" style="left:574.7px;top:388.2px;font-size:7.8px;color:#f0f0f0;transform:scaleX(0.80);transform-origin:0 0">1 Aug 02:00</div>
<div class="t" style="left:618.7px;top:388.2px;font-size:7.8px;color:#f0f0f0;transform:scaleX(0.80);transform-origin:0 0">2 Aug 10:00</div>
<div class="t" style="left:662.7px;top:388.2px;font-size:7.8px;color:#f0f0f0;transform:scaleX(0.80);transform-origin:0 0">5 Aug 18:00</div>
<div class="t" style="left:707.7px;top:388.2px;font-size:7.8px;color:#f0f0f0;transform:scaleX(0.80);transform-origin:0 0">7 Aug 02:00</div>
<div class="t" style="left:751.7px;top:388.2px;font-size:7.8px;color:#f0f0f0;transform:scaleX(0.80);transform-origin:0 0">8 Aug 10:00</div>
<div class="t" style="left:796.7px;top:388.2px;font-size:7.8px;color:#f0f0f0;transform:scaleX(0.80);transform-origin:0 0">9 Aug 18:00</div>
<div style="position:absolute;left:172px;top:400px;width:825px;height:15px;background:#f0f0f0"></div>
<div style="position:absolute;left:172px;top:401px;width:824px;height:1px;background:#505050"></div>
<div style="position:absolute;left:172px;top:401px;width:1px;height:14px;background:#606060"></div>
<div class="t" style="left:183.5px;top:404.3px;font-size:7.55px;color:#7c7c7c;">EURJPY,Daily</div>
<div class="t" style="left:248px;top:404.3px;font-size:7.55px;color:#7c7c7c;">EURRUB,Daily</div>
<div class="t" style="left:313px;top:404.3px;font-size:7.55px;color:#7c7c7c;">XAUUSD,H4</div>
<div class="t" style="left:372.5px;top:404.3px;font-size:7.55px;color:#7c7c7c;">EURUSD,Daily</div>
<div class="t" style="left:438.5px;top:404.3px;font-size:7.55px;color:#7c7c7c;">USDRUR,Daily</div>
<div class="t" style="left:506px;top:404.3px;font-size:7.55px;color:#7c7c7c;">BRN,Daily</div>
<div class="t" style="left:558.5px;top:404.3px;font-size:7.55px;color:#7c7c7c;">BTCUSD,Daily</div>
<div class="t" style="left:625.5px;top:404.3px;font-size:7.55px;color:#7c7c7c;">EURUSD,Daily</div>
<div class="t" style="left:691.5px;top:404.3px;font-size:7.55px;color:#7c7c7c;">EURUSD,H1</div>
<div style="position:absolute;left:240px;top:403px;width:1px;height:11px;background:#909090"></div>
<div style="position:absolute;left:306px;top:403px;width:1px;height:11px;background:#909090"></div>
<div style="position:absolute;left:365px;top:403px;width:1px;height:11px;background:#909090"></div>
<div style="position:absolute;left:431px;top:403px;width:1px;height:11px;background:#909090"></div>
<div style="position:absolute;left:499px;top:403px;width:1px;height:11px;background:#909090"></div>
<div style="position:absolute;left:551px;top:403px;width:1px;height:11px;background:#909090"></div>
<div style="position:absolute;left:617px;top:403px;width:1px;height:11px;background:#909090"></div>
<div style="position:absolute;left:685px;top:403px;width:1px;height:11px;background:#909090"></div>
<div style="position:absolute;left:742px;top:401px;width:87px;height:14px;background:#fff;border:1px solid #404040;border-top:none;box-sizing:border-box;border-radius:0 0 2px 2px"></div>
<div class="t" style="left:750px;top:404.3px;font-size:7.6px;color:#111;">EURUSD,H1 (visual)</div>
<svg style="left:974px;top:404px" width="20" height="8"><path d="M4 0.5 L0.5 4 L4 7.5Z M15.5 0.5 L19 4 L15.5 7.5Z" fill="#909090"/></svg>
<div style="position:absolute;left:3px;top:416px;width:994px;height:144px;background:#f0f0f0"></div>
<div style="position:absolute;left:13px;top:418px;width:982px;height:142px;background:#fff"></div>
<svg style="left:4px;top:419px" width="7" height="7" viewBox="0 0 7 7"><path d="M1.3 1.3 L5.7 5.7 M5.7 1.3 L1.3 5.7" stroke="#222" stroke-width="1.15"/></svg>
<div style="position:absolute;left:4px;top:428px;width:8px;height:147px;background:#2b2b2b"></div>
<div class="t" style="left:8px;top:563px;font-size:8.1px;color:#e8e8e8;transform:translate(-50%,-50%) rotate(-90deg);transform-origin:50% 50%;line-height:1">Тестер</div>
<svg style="left:0;top:0" width="1000" height="597">
<path d="M39.32 422 V523M61.53 422 V523M83.75 422 V523M105.97 422 V523M128.19 422 V523M150.40 422 V523M172.62 422 V523M194.84 422 V523M217.05 422 V523M239.27 422 V523M261.49 422 V523M283.70 422 V523M305.92 422 V523M328.14 422 V523M350.36 422 V523M372.57 422 V523M394.79 422 V523M417.01 422 V523M439.22 422 V523M461.44 422 V523M483.66 422 V523M505.87 422 V523M528.09 422 V523M550.31 422 V523M572.52 422 V523M594.74 422 V523M616.96 422 V523M639.18 422 V523M661.39 422 V523M683.61 422 V523M705.83 422 V523M728.04 422 V523M750.26 422 V523M772.48 422 V523M794.69 422 V523M816.91 422 V523M839.13 422 V523M861.35 422 V523M883.56 422 V523M905.78 422 V523M928.00 422 V523M950.21 422 V523" stroke="#c4c4c4" stroke-width="1" stroke-dasharray="2 2"/>
<path d="M39.32 525 V548M61.53 525 V548M83.75 525 V548M105.97 525 V548M128.19 525 V548M150.40 525 V548M172.62 525 V548M194.84 525 V548M217.05 525 V548M239.27 525 V548M261.49 525 V548M283.70 525 V548M305.92 525 V548M328.14 525 V548M350.36 525 V548M372.57 525 V548M394.79 525 V548M417.01 525 V548M439.22 525 V548M461.44 525 V548M483.66 525 V548M505.87 525 V548M528.09 525 V548M550.31 525 V548M572.52 525 V548M594.74 525 V548M616.96 525 V548M639.18 525 V548M661.39 525 V548M683.61 525 V548M705.83 525 V548M728.04 525 V548M750.26 525 V548M772.48 525 V548M794.69 525 V548M816.91 525 V548M839.13 525 V548M861.35 525 V548M883.56 525 V548M905.78 525 V548M928.00 525 V548M950.21 525 V548" stroke="#c4c4c4" stroke-width="1" stroke-dasharray="2 2"/>
<path d="M18 434.5 H963M18 456.5 H963M18 478.5 H963M18 500.5 H963" stroke="#d2d2d2" stroke-width="1" stroke-dasharray="2 2" shape-rendering="crispEdges"/>
<path d="M17.5 523.5 V421.5 H963.5 V523.5" stroke="#404040" stroke-width="1" fill="none" shape-rendering="crispEdges"/>
<path d="M18 523.5 H963" stroke="#606060" stroke-width="1" fill="none" shape-rendering="crispEdges"/>
<path d="M17.5 524.5 V548.5 H963.5 V524.5" stroke="#404040" stroke-width="1" fill="none" shape-rendering="crispEdges"/>
<path d="M18 524.5 H963" stroke="#8a8a8a" stroke-width="1" fill="none" shape-rendering="crispEdges"/>
<path d="M963 434.5 h3M963 456.5 h3M963 478.5 h3M963 500.5 h3M963 522.5 h3" stroke="#404040" stroke-width="1" shape-rendering="crispEdges"/>
<path d="M39.5 548 v3M61.5 548 v3M83.5 548 v3M105.5 548 v3M128.5 548 v3M150.5 548 v3M172.5 548 v3M194.5 548 v3M217.5 548 v3M239.5 548 v3M261.5 548 v3M283.5 548 v3M305.5 548 v3M328.5 548 v3M350.5 548 v3M372.5 548 v3M394.5 548 v3M417.5 548 v3M439.5 548 v3M461.5 548 v3M483.5 548 v3M505.5 548 v3M528.5 548 v3M550.5 548 v3M572.5 548 v3M594.5 548 v3M616.5 548 v3M639.5 548 v3M661.5 548 v3M683.5 548 v3M705.5 548 v3M728.5 548 v3M750.5 548 v3M772.5 548 v3M794.5 548 v3M816.5 548 v3M839.5 548 v3M861.5 548 v3M883.5 548 v3M905.5 548 v3M927.5 548 v3M950.5 548 v3" stroke="#404040" stroke-width="1" shape-rendering="crispEdges"/>
<path d="M18 518 L30 517.5 L60 515 L100 511.5 L160 506 L176 504 L177 502 L180 504 L250 498.6 L330 491.5 L350 490 L351 484 L355 489 L400 484 L420 483 L425 480.5 L430 482 L475 477.5 L477 472 L482 476 L500 475.5 L560 470 L600 466.5 L650 462 L713 456 L715 452.5 L719 455 L750 454 L790 450.5 L820 448 L868 443.5 L874 445.5 L880 442 L900 440 L950 436 L954 435.5 L957 430.5 L962 434.5" stroke="#1414c0" stroke-width="1.6" fill="none" stroke-linejoin="round"/>
<path d="M20.0 548 V543M29.0 548 V546M39.5 548 V546M43.0 548 V546M56.0 548 V546M83.0 548 V545M90.5 548 V546M160.0 548 V543M175.0 548 V538M177.0 548 V540M185.5 548 V546M202.0 548 V546M218.0 548 V546M228.5 548 V546M245.7 548 V543M262.0 548 V546M278.0 548 V546M300.0 548 V543M311.0 548 V546M329.0 548 V546M351.5 548 V527.5M353.0 548 V538M355.0 548 V545M361.0 548 V546M374.6 548 V546M380.6 548 V546M395.0 548 V543M417.6 548 V543M423.6 548 V538M425.0 548 V545M443.0 548 V546M477.0 548 V527.5M479.0 548 V538M481.0 548 V545M487.0 548 V546M532.6 548 V546M552.0 548 V546M560.8 548 V543M574.0 548 V546M581.6 548 V546M611.0 548 V543M617.0 548 V546M621.7 548 V546M636.5 548 V546M642.4 548 V546M660.0 548 V546M675.0 548 V543M684.0 548 V546M715.0 548 V538M718.0 548 V543M743.0 548 V546M773.7 548 V543M787.0 548 V546M794.5 548 V546M813.8 548 V546M827.0 548 V543M845.0 548 V546M862.8 548 V546M867.0 548 V543M877.6 548 V546M886.5 548 V543M898.0 548 V546M910.0 548 V546M916.0 548 V546M927.4 548 V546M937.0 548 V543M941.0 548 V546M954.7 548 V527.5M956.0 548 V538M958.6 548 V545" stroke="#20c020" stroke-width="1" fill="none"/>
</svg>
<div class="t" style="left:19.5px;top:424.6px;font-size:6.55px"><span style="color:#2020c0">Баланс</span> <span style="color:#555">/</span> <span style="color:#20b020">Средства</span> <span style="color:#555">/</span> <span style="color:#ff1010">Контрольные точки (очень грубый метод на основе ближайшего меньшего таймфрейма, результаты нельзя принимать во внимание)</span></div>
<div class="t" style="left:19.5px;top:527.8px;font-size:6.4px;color:#222;">Объем</div>
<div class="t" style="left:966.5px;top:431.1px;font-size:7.4px;color:#000;transform:scaleX(0.84);transform-origin:0 0">21967</div>
<div class="t" style="left:966.5px;top:453.1px;font-size:7.4px;color:#000;transform:scaleX(0.84);transform-origin:0 0">18819</div>
<div class="t" style="left:966.5px;top:475.1px;font-size:7.4px;color:#000;transform:scaleX(0.84);transform-origin:0 0">15671</div>
<div class="t" style="left:966.5px;top:497.1px;font-size:7.4px;color:#000;transform:scaleX(0.84);transform-origin:0 0">12524</div>
<div class="t" style="left:966.5px;top:519.1px;font-size:7.4px;color:#000;transform:scaleX(0.84);transform-origin:0 0">9376</div>
<div class="t" style="left:17.6px;top:550px;font-size:7.4px;color:#000;transform:scaleX(0.8);transform-origin:0 0">0</div>
<div class="t" style="left:-0.7px;top:550px;width:40px;text-align:right;font-size:7.4px;color:#000;transform:scaleX(0.8);transform-origin:100% 0">24</div>
<div class="t" style="left:21.5px;top:550px;width:40px;text-align:right;font-size:7.4px;color:#000;transform:scaleX(0.8);transform-origin:100% 0">46</div>
<div class="t" style="left:43.8px;top:550px;width:40px;text-align:right;font-size:7.4px;color:#000;transform:scaleX(0.8);transform-origin:100% 0">67</div>
<div class="t" style="left:66.0px;top:550px;width:40px;text-align:right;font-size:7.4px;color:#000;transform:scaleX(0.8);transform-origin:100% 0">89</div>
<div class="t" style="left:88.2px;top:550px;width:40px;text-align:right;font-size:7.4px;color:#000;transform:scaleX(0.8);transform-origin:100% 0">110</div>
<div class="t" style="left:110.4px;top:550px;width:40px;text-align:right;font-size:7.4px;color:#000;transform:scaleX(0.8);transform-origin:100% 0">132</div>
<div class="t" style="left:132.6px;top:550px;width:40px;text-align:right;font-size:7.4px;color:#000;transform:scaleX(0.8);transform-origin:100% 0">153</div>
<div class="t" style="left:154.8px;top:550px;width:40px;text-align:right;font-size:7.4px;color:#000;transform:scaleX(0.8);transform-origin:100% 0">175</div>
<div class="t" style="left:177.1px;top:550px;width:40px;text-align:right;font-size:7.4px;color:#000;transform:scaleX(0.8);transform-origin:100% 0">196</div>
<div class="t" style="left:199.3px;top:550px;width:40px;text-align:right;font-size:7.4px;color:#000;transform:scaleX(0.8);transform-origin:100% 0">218</div>
<div class="t" style="left:221.5px;top:550px;width:40px;text-align:right;font-size:7.4px;color:#000;transform:scaleX(0.8);transform-origin:100% 0">239</div>
<div class="t" style="left:243.7px;top:550px;width:40px;text-align:right;font-size:7.4px;color:#000;transform:scaleX(0.8);transform-origin:100% 0">260</div>
<div class="t" style="left:265.9px;top:550px;width:40px;text-align:right;font-size:7.4px;color:#000;transform:scaleX(0.8);transform-origin:100% 0">282</div>
<div class="t" style="left:288.1px;top:550px;width:40px;text-align:right;font-size:7.4px;color:#000;transform:scaleX(0.8);transform-origin:100% 0">303</div>
<div class="t" style="left:310.4px;top:550px;width:40px;text-align:right;font-size:7.4px;color:#000;transform:scaleX(0.8);transform-origin:100% 0">325</div>
<div class="t" style="left:332.6px;top:550px;width:40px;text-align:right;font-size:7.4px;color:#000;transform:scaleX(0.8);transform-origin:100% 0">346</div>
<div class="t" style="left:354.8px;top:550px;width:40px;text-align:right;font-size:7.4px;color:#000;transform:scaleX(0.8);transform-origin:100% 0">368</div>
<div class="t" style="left:377.0px;top:550px;width:40px;text-align:right;font-size:7.4px;color:#000;transform:scaleX(0.8);transform-origin:100% 0">389</div>
<div class="t" style="left:399.2px;top:550px;width:40px;text-align:right;font-size:7.4px;color:#000;transform:scaleX(0.8);transform-origin:100% 0">411</div>
<div class="t" style="left:421.4px;top:550px;width:40px;text-align:right;font-size:7.4px;color:#000;transform:scaleX(0.8);transform-origin:100% 0">432</div>
<div class="t" style="left:443.7px;top:550px;width:40px;text-align:right;font-size:7.4px;color:#000;transform:scaleX(0.8);transform-origin:100% 0">454</div>
<div class="t" style="left:465.9px;top:550px;width:40px;text-align:right;font-size:7.4px;color:#000;transform:scaleX(0.8);transform-origin:100% 0">475</div>
<div class="t" style="left:488.1px;top:550px;width:40px;text-align:right;font-size:7.4px;color:#000;transform:scaleX(0.8);transform-origin:100% 0">497</div>
<div class="t" style="left:510.3px;top:550px;width:40px;text-align:right;font-size:7.4px;color:#000;transform:scaleX(0.8);transform-origin:100% 0">518</div>
<div class="t" style="left:532.5px;top:550px;width:40px;text-align:right;font-size:7.4px;color:#000;transform:scaleX(0.8);transform-origin:100% 0">540</div>
<div class="t" style="left:554.7px;top:550px;width:40px;text-align:right;font-size:7.4px;color:#000;transform:scaleX(0.8);transform-origin:100% 0">561</div>
<div class="t" style="left:577.0px;top:550px;width:40px;text-align:right;font-size:7.4px;color:#000;transform:scaleX(0.8);transform-origin:100% 0">583</div>
<div class="t" style="left:599.2px;top:550px;width:40px;text-align:right;font-size:7.4px;color:#000;transform:scaleX(0.8);transform-origin:100% 0">604</div>
<div class="t" style="left:621.4px;top:550px;width:40px;text-align:right;font-size:7.4px;color:#000;transform:scaleX(0.8);transform-origin:100% 0">626</div>
<div class="t" style="left:643.6px;top:550px;width:40px;text-align:right;font-size:7.4px;color:#000;transform:scaleX(0.8);transform-origin:100% 0">647</div>
<div class="t" style="left:665.8px;top:550px;width:40px;text-align:right;font-size:7.4px;color:#000;transform:scaleX(0.8);transform-origin:100% 0">669</div>
<div class="t" style="left:688.0px;top:550px;width:40px;text-align:right;font-size:7.4px;color:#000;transform:scaleX(0.8);transform-origin:100% 0">690</div>
<div class="t" style="left:710.3px;top:550px;width:40px;text-align:right;font-size:7.4px;color:#000;transform:scaleX(0.8);transform-origin:100% 0">712</div>
<div class="t" style="left:732.5px;top:550px;width:40px;text-align:right;font-size:7.4px;color:#000;transform:scaleX(0.8);transform-origin:100% 0">733</div>
<div class="t" style="left:754.7px;top:550px;width:40px;text-align:right;font-size:7.4px;color:#000;transform:scaleX(0.8);transform-origin:100% 0">755</div>
<div class="t" style="left:776.9px;top:550px;width:40px;text-align:right;font-size:7.4px;color:#000;transform:scaleX(0.8);transform-origin:100% 0">776</div>
<div class="t" style="left:799.1px;top:550px;width:40px;text-align:right;font-size:7.4px;color:#000;transform:scaleX(0.8);transform-origin:100% 0">798</div>
<div class="t" style="left:821.3px;top:550px;width:40px;text-align:right;font-size:7.4px;color:#000;transform:scaleX(0.8);transform-origin:100% 0">819</div>
<div class="t" style="left:843.6px;top:550px;width:40px;text-align:right;font-size:7.4px;color:#000;transform:scaleX(0.8);transform-origin:100% 0">840</div>
<div class="t" style="left:865.8px;top:550px;width:40px;text-align:right;font-size:7.4px;color:#000;transform:scaleX(0.8);transform-origin:100% 0">862</div>
<div class="t" style="left:888.0px;top:550px;width:40px;text-align:right;font-size:7.4px;color:#000;transform:scaleX(0.8);transform-origin:100% 0">883</div>
<div class="t" style="left:910.2px;top:550px;width:40px;text-align:right;font-size:7.4px;color:#000;transform:scaleX(0.8);transform-origin:100% 0">905</div>
<div style="position:absolute;left:13px;top:560px;width:982px;height:1px;background:#404040"></div>
<div style="position:absolute;left:13px;top:561px;width:982px;height:15px;background:#f0f0f0"></div>
<div class="t" style="left:23px;top:563.8px;font-size:8.3px;color:#888;">Настройки</div>
<div style="position:absolute;left:70px;top:563px;width:1px;height:11px;background:#909090"></div>
<div class="t" style="left:78px;top:563.8px;font-size:8.3px;color:#888;">Результаты</div>
<div style="position:absolute;left:129px;top:560px;width:43px;height:15px;background:#fff;border:1px solid #404040;border-top:none;box-sizing:border-box;border-radius:0 0 2px 2px"></div>
<div class="t" style="left:135.5px;top:563.8px;font-size:8.3px;color:#111;font-weight:bold">График</div>
<div class="t" style="left:177px;top:563.8px;font-size:8.3px;color:#888;">Отчет</div>
<div style="position:absolute;left:206px;top:563px;width:1px;height:11px;background:#909090"></div>
<div class="t" style="left:213px;top:563.8px;font-size:8.3px;color:#888;">Журнал</div>
<div style="position:absolute;left:251px;top:563px;width:1px;height:11px;background:#909090"></div>
<div style="position:absolute;left:3px;top:576px;width:994px;height:1px;background:#fff"></div>
<div style="position:absolute;left:3px;top:577px;width:994px;height:1px;background:#d4d4d4"></div>
<div style="position:absolute;left:3px;top:578px;width:994px;height:16px;background:#f0f0f0"></div>
<div style="position:absolute;left:0px;top:594px;width:1000px;height:1px;background:#161a27"></div>
<div class="t" style="left:5px;top:583.6px;font-size:8.15px;color:#111;">Для вызова справки нажмите F1</div>
<div style="position:absolute;left:502px;top:581px;width:1px;height:12px;background:#a8a8a8"></div>
<div style="position:absolute;left:582px;top:581px;width:1px;height:12px;background:#a8a8a8"></div>
<div style="position:absolute;left:653px;top:581px;width:1px;height:12px;background:#a8a8a8"></div>
<div style="position:absolute;left:702px;top:581px;width:1px;height:12px;background:#a8a8a8"></div>
<div style="position:absolute;left:752px;top:581px;width:1px;height:12px;background:#a8a8a8"></div>
<div style="position:absolute;left:799px;top:581px;width:1px;height:12px;background:#a8a8a8"></div>
<div style="position:absolute;left:847px;top:581px;width:1px;height:12px;background:#a8a8a8"></div>
<div style="position:absolute;left:893px;top:581px;width:1px;height:12px;background:#a8a8a8"></div>
<div class="t" style="left:507px;top:583.8px;font-size:8.15px;color:#111;letter-spacing:0px">Default</div>
<div class="t" style="left:587px;top:583.8px;font-size:8.15px;color:#111;letter-spacing:-0.35px">2019.07.24 13:00</div>
<div class="t" style="left:658px;top:583.8px;font-size:8.15px;color:#111;letter-spacing:-0.3px">O: 1.11380</div>
<div class="t" style="left:707px;top:583.8px;font-size:8.15px;color:#111;letter-spacing:-0.3px">H: 1.11539</div>
<div class="t" style="left:756px;top:583.8px;font-size:8.15px;color:#111;letter-spacing:-0.3px">L: 1.11379</div>
<div class="t" style="left:803px;top:583.8px;font-size:8.15px;color:#111;letter-spacing:-0.3px">C: 1.11537</div>
<div class="t" style="left:852px;top:583.8px;font-size:8.15px;color:#111;letter-spacing:-0.2px">V: 2784</div>
<div class="t" style="left:916px;top:583.8px;font-size:8.15px;color:#111;letter-spacing:-0.1px">3554/2 kb</div>
<svg style="left:897.5px;top:582px" width="18" height="10" viewBox="0 0 18 10"><rect x="0.50" y="0" width="1.2" height="8.00" fill="#7a9a28"/><rect x="0.50" y="8.00" width="1.2" height="1.50" fill="#245a7a"/><rect x="2.35" y="0" width="1.2" height="7.25" fill="#7a9a28"/><rect x="2.35" y="7.25" width="1.2" height="2.25" fill="#245a7a"/><rect x="4.20" y="0" width="1.2" height="6.50" fill="#7a9a28"/><rect x="4.20" y="6.50" width="1.2" height="3.00" fill="#245a7a"/><rect x="6.05" y="0" width="1.2" height="5.75" fill="#7a9a28"/><rect x="6.05" y="5.75" width="1.2" height="3.75" fill="#245a7a"/><rect x="7.90" y="0" width="1.2" height="5.00" fill="#7a9a28"/><rect x="7.90" y="5.00" width="1.2" height="4.50" fill="#245a7a"/><rect x="9.75" y="0" width="1.2" height="4.25" fill="#7a9a28"/><rect x="9.75" y="4.25" width="1.2" height="5.25" fill="#245a7a"/><rect x="11.60" y="0" width="1.2" height="3.50" fill="#7a9a28"/><rect x="11.60" y="3.50" width="1.2" height="6.00" fill="#245a7a"/><rect x="13.45" y="0" width="1.2" height="2.75" fill="#7a9a28"/><rect x="13.45" y="2.75" width="1.2" height="6.75" fill="#245a7a"/><rect x="15.30" y="0" width="1.2" height="2.00" fill="#7a9a28"/><rect x="15.30" y="2.00" width="1.2" height="7.50" fill="#245a7a"/></svg>
<svg style="left:985px;top:584px" width="11" height="10" viewBox="0 0 11 10"><path d="M10 1 L1 10 M10 4 L4 10 M10 7 L7 10" stroke="#b0b0b0" stroke-width="1"/></svg>
<div style="position:absolute;left:996px;top:52px;width:1px;height:543px;background:#f0f0f0"></div>
<div style="position:absolute;left:997px;top:18px;width:3px;height:577px;background:#161a27"></div>
<div style="position:absolute;left:0px;top:18px;width:3px;height:577px;background:#161a27"></div>
<div style="position:absolute;left:998px;top:0px;width:1px;height:597px;background:#1a5c80"></div>
<div style="position:absolute;left:999px;top:0px;width:1px;height:597px;background:#1aa4d4"></div>
</body></html>
